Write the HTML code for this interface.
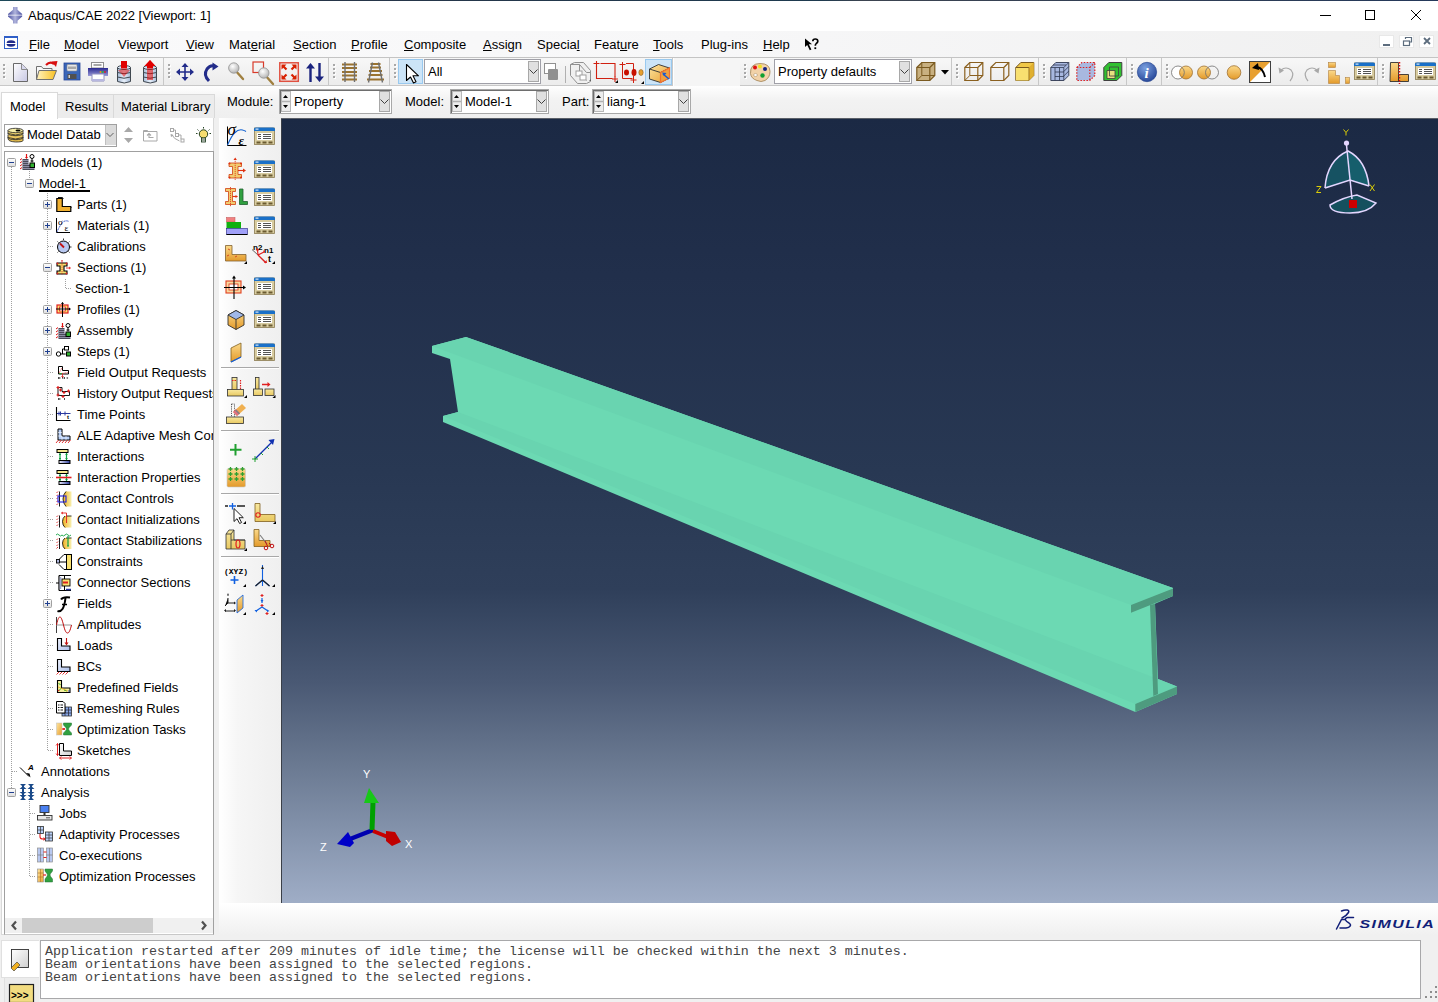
<!DOCTYPE html>
<html><head><meta charset="utf-8"><title>Abaqus/CAE</title>
<style>
html,body{margin:0;padding:0;width:1438px;height:1002px;overflow:hidden;background:#f0f0f0;font-family:"Liberation Sans",sans-serif;font-size:13px;color:#000;position:relative}
.a{position:absolute}
.t{position:absolute;white-space:nowrap}
u{text-decoration:underline;text-underline-offset:1px}
svg.ov{position:absolute;left:0;top:0;width:1438px;height:1002px;pointer-events:none}
</style></head><body>
<div class="a" style="left:0px;top:0px;width:1438px;height:1px;background:linear-gradient(90deg,#1d4a5a 0%,#2a3346 9%,#1e3a4f 57%,#3c4450 60%,#24385a 100%)"></div>
<div class="a" style="left:0px;top:1px;width:1438px;height:30px;background:#fff"></div>
<div class="t" style="left:28px;top:8.20px;font-size:13px;line-height:15px;color:#000;">Abaqus/CAE 2022 [Viewport: 1]</div>
<div class="a" style="left:0px;top:31px;width:1438px;height:26px;background:linear-gradient(90deg,#fafafb 0%,#f7f7f8 50%,#f0f0f0 100%)"></div>
<div class="a" style="left:0px;top:57px;width:1438px;height:1px;background:#c4c4c4"></div>
<div class="t" style="left:29px;top:37.20px;font-size:13px;line-height:15px;color:#000;"><u>F</u>ile</div>
<div class="t" style="left:64px;top:37.20px;font-size:13px;line-height:15px;color:#000;"><u>M</u>odel</div>
<div class="t" style="left:118px;top:37.20px;font-size:13px;line-height:15px;color:#000;">Vie<u>w</u>port</div>
<div class="t" style="left:186px;top:37.20px;font-size:13px;line-height:15px;color:#000;"><u>V</u>iew</div>
<div class="t" style="left:229px;top:37.20px;font-size:13px;line-height:15px;color:#000;">Mat<u>e</u>rial</div>
<div class="t" style="left:293px;top:37.20px;font-size:13px;line-height:15px;color:#000;"><u>S</u>ection</div>
<div class="t" style="left:351px;top:37.20px;font-size:13px;line-height:15px;color:#000;"><u>P</u>rofile</div>
<div class="t" style="left:404px;top:37.20px;font-size:13px;line-height:15px;color:#000;"><u>C</u>omposite</div>
<div class="t" style="left:483px;top:37.20px;font-size:13px;line-height:15px;color:#000;"><u>A</u>ssign</div>
<div class="t" style="left:537px;top:37.20px;font-size:13px;line-height:15px;color:#000;">Specia<u>l</u></div>
<div class="t" style="left:594px;top:37.20px;font-size:13px;line-height:15px;color:#000;">Feat<u>u</u>re</div>
<div class="t" style="left:653px;top:37.20px;font-size:13px;line-height:15px;color:#000;"><u>T</u>ools</div>
<div class="t" style="left:701px;top:37.20px;font-size:13px;line-height:15px;color:#000;">Plu<u>g</u>-ins</div>
<div class="t" style="left:763px;top:37.20px;font-size:13px;line-height:15px;color:#000;"><u>H</u>elp</div>
<div class="a" style="left:1379px;top:35px;width:15px;height:13px;background:#fff;box-shadow:inset 0 0 0 1px #e8e8e8"></div>
<div class="a" style="left:1399px;top:35px;width:15px;height:13px;background:#fff;box-shadow:inset 0 0 0 1px #e8e8e8"></div>
<div class="a" style="left:1419px;top:35px;width:15px;height:13px;background:#fff;box-shadow:inset 0 0 0 1px #e8e8e8"></div>
<div class="a" style="left:0px;top:58px;width:1438px;height:28px;background:#f5f5f5"></div>
<div class="a" style="left:0px;top:58px;width:163px;height:27px;background:linear-gradient(#f7f7f7,#ececec)"></div>
<div class="a" style="left:0px;top:85px;width:163px;height:1px;background:#c8c8c8"></div>
<div class="a" style="left:163px;top:58px;width:1px;height:28px;background:#c8c8c8"></div>
<div class="a" style="left:164px;top:58px;width:1px;height:28px;background:#fff"></div>
<div class="a" style="left:3px;top:64px;width:2px;height:2px;background:#a8a8a8;box-shadow:1px 1px 0 #fff"></div>
<div class="a" style="left:3px;top:68px;width:2px;height:2px;background:#a8a8a8;box-shadow:1px 1px 0 #fff"></div>
<div class="a" style="left:3px;top:72px;width:2px;height:2px;background:#a8a8a8;box-shadow:1px 1px 0 #fff"></div>
<div class="a" style="left:3px;top:76px;width:2px;height:2px;background:#a8a8a8;box-shadow:1px 1px 0 #fff"></div>
<div class="a" style="left:164px;top:58px;width:164px;height:27px;background:linear-gradient(#f7f7f7,#ececec)"></div>
<div class="a" style="left:164px;top:85px;width:164px;height:1px;background:#c8c8c8"></div>
<div class="a" style="left:328px;top:58px;width:1px;height:28px;background:#c8c8c8"></div>
<div class="a" style="left:329px;top:58px;width:1px;height:28px;background:#fff"></div>
<div class="a" style="left:168px;top:64px;width:2px;height:2px;background:#a8a8a8;box-shadow:1px 1px 0 #fff"></div>
<div class="a" style="left:168px;top:68px;width:2px;height:2px;background:#a8a8a8;box-shadow:1px 1px 0 #fff"></div>
<div class="a" style="left:168px;top:72px;width:2px;height:2px;background:#a8a8a8;box-shadow:1px 1px 0 #fff"></div>
<div class="a" style="left:168px;top:76px;width:2px;height:2px;background:#a8a8a8;box-shadow:1px 1px 0 #fff"></div>
<div class="a" style="left:329px;top:58px;width:60px;height:27px;background:linear-gradient(#f7f7f7,#ececec)"></div>
<div class="a" style="left:329px;top:85px;width:60px;height:1px;background:#c8c8c8"></div>
<div class="a" style="left:389px;top:58px;width:1px;height:28px;background:#c8c8c8"></div>
<div class="a" style="left:390px;top:58px;width:1px;height:28px;background:#fff"></div>
<div class="a" style="left:333px;top:64px;width:2px;height:2px;background:#a8a8a8;box-shadow:1px 1px 0 #fff"></div>
<div class="a" style="left:333px;top:68px;width:2px;height:2px;background:#a8a8a8;box-shadow:1px 1px 0 #fff"></div>
<div class="a" style="left:333px;top:72px;width:2px;height:2px;background:#a8a8a8;box-shadow:1px 1px 0 #fff"></div>
<div class="a" style="left:333px;top:76px;width:2px;height:2px;background:#a8a8a8;box-shadow:1px 1px 0 #fff"></div>
<div class="a" style="left:390px;top:58px;width:282px;height:27px;background:linear-gradient(#f7f7f7,#ececec)"></div>
<div class="a" style="left:390px;top:85px;width:282px;height:1px;background:#c8c8c8"></div>
<div class="a" style="left:672px;top:58px;width:1px;height:28px;background:#c8c8c8"></div>
<div class="a" style="left:673px;top:58px;width:1px;height:28px;background:#fff"></div>
<div class="a" style="left:394px;top:64px;width:2px;height:2px;background:#a8a8a8;box-shadow:1px 1px 0 #fff"></div>
<div class="a" style="left:394px;top:68px;width:2px;height:2px;background:#a8a8a8;box-shadow:1px 1px 0 #fff"></div>
<div class="a" style="left:394px;top:72px;width:2px;height:2px;background:#a8a8a8;box-shadow:1px 1px 0 #fff"></div>
<div class="a" style="left:394px;top:76px;width:2px;height:2px;background:#a8a8a8;box-shadow:1px 1px 0 #fff"></div>
<div class="a" style="left:740px;top:58px;width:211px;height:27px;background:linear-gradient(#f7f7f7,#ececec)"></div>
<div class="a" style="left:740px;top:85px;width:211px;height:1px;background:#c8c8c8"></div>
<div class="a" style="left:951px;top:58px;width:1px;height:28px;background:#c8c8c8"></div>
<div class="a" style="left:952px;top:58px;width:1px;height:28px;background:#fff"></div>
<div class="a" style="left:744px;top:64px;width:2px;height:2px;background:#a8a8a8;box-shadow:1px 1px 0 #fff"></div>
<div class="a" style="left:744px;top:68px;width:2px;height:2px;background:#a8a8a8;box-shadow:1px 1px 0 #fff"></div>
<div class="a" style="left:744px;top:72px;width:2px;height:2px;background:#a8a8a8;box-shadow:1px 1px 0 #fff"></div>
<div class="a" style="left:744px;top:76px;width:2px;height:2px;background:#a8a8a8;box-shadow:1px 1px 0 #fff"></div>
<div class="a" style="left:952px;top:58px;width:86px;height:27px;background:linear-gradient(#f7f7f7,#ececec)"></div>
<div class="a" style="left:952px;top:85px;width:86px;height:1px;background:#c8c8c8"></div>
<div class="a" style="left:1038px;top:58px;width:1px;height:28px;background:#c8c8c8"></div>
<div class="a" style="left:1039px;top:58px;width:1px;height:28px;background:#fff"></div>
<div class="a" style="left:956px;top:64px;width:2px;height:2px;background:#a8a8a8;box-shadow:1px 1px 0 #fff"></div>
<div class="a" style="left:956px;top:68px;width:2px;height:2px;background:#a8a8a8;box-shadow:1px 1px 0 #fff"></div>
<div class="a" style="left:956px;top:72px;width:2px;height:2px;background:#a8a8a8;box-shadow:1px 1px 0 #fff"></div>
<div class="a" style="left:956px;top:76px;width:2px;height:2px;background:#a8a8a8;box-shadow:1px 1px 0 #fff"></div>
<div class="a" style="left:1039px;top:58px;width:87px;height:27px;background:linear-gradient(#f7f7f7,#ececec)"></div>
<div class="a" style="left:1039px;top:85px;width:87px;height:1px;background:#c8c8c8"></div>
<div class="a" style="left:1126px;top:58px;width:1px;height:28px;background:#c8c8c8"></div>
<div class="a" style="left:1127px;top:58px;width:1px;height:28px;background:#fff"></div>
<div class="a" style="left:1043px;top:64px;width:2px;height:2px;background:#a8a8a8;box-shadow:1px 1px 0 #fff"></div>
<div class="a" style="left:1043px;top:68px;width:2px;height:2px;background:#a8a8a8;box-shadow:1px 1px 0 #fff"></div>
<div class="a" style="left:1043px;top:72px;width:2px;height:2px;background:#a8a8a8;box-shadow:1px 1px 0 #fff"></div>
<div class="a" style="left:1043px;top:76px;width:2px;height:2px;background:#a8a8a8;box-shadow:1px 1px 0 #fff"></div>
<div class="a" style="left:1127px;top:58px;width:34px;height:27px;background:linear-gradient(#f7f7f7,#ececec)"></div>
<div class="a" style="left:1127px;top:85px;width:34px;height:1px;background:#c8c8c8"></div>
<div class="a" style="left:1161px;top:58px;width:1px;height:28px;background:#c8c8c8"></div>
<div class="a" style="left:1162px;top:58px;width:1px;height:28px;background:#fff"></div>
<div class="a" style="left:1131px;top:64px;width:2px;height:2px;background:#a8a8a8;box-shadow:1px 1px 0 #fff"></div>
<div class="a" style="left:1131px;top:68px;width:2px;height:2px;background:#a8a8a8;box-shadow:1px 1px 0 #fff"></div>
<div class="a" style="left:1131px;top:72px;width:2px;height:2px;background:#a8a8a8;box-shadow:1px 1px 0 #fff"></div>
<div class="a" style="left:1131px;top:76px;width:2px;height:2px;background:#a8a8a8;box-shadow:1px 1px 0 #fff"></div>
<div class="a" style="left:1162px;top:58px;width:215px;height:27px;background:linear-gradient(#f7f7f7,#ececec)"></div>
<div class="a" style="left:1162px;top:85px;width:215px;height:1px;background:#c8c8c8"></div>
<div class="a" style="left:1377px;top:58px;width:1px;height:28px;background:#c8c8c8"></div>
<div class="a" style="left:1378px;top:58px;width:1px;height:28px;background:#fff"></div>
<div class="a" style="left:1166px;top:64px;width:2px;height:2px;background:#a8a8a8;box-shadow:1px 1px 0 #fff"></div>
<div class="a" style="left:1166px;top:68px;width:2px;height:2px;background:#a8a8a8;box-shadow:1px 1px 0 #fff"></div>
<div class="a" style="left:1166px;top:72px;width:2px;height:2px;background:#a8a8a8;box-shadow:1px 1px 0 #fff"></div>
<div class="a" style="left:1166px;top:76px;width:2px;height:2px;background:#a8a8a8;box-shadow:1px 1px 0 #fff"></div>
<div class="a" style="left:1378px;top:58px;width:60px;height:27px;background:linear-gradient(#f7f7f7,#ececec)"></div>
<div class="a" style="left:1378px;top:85px;width:60px;height:1px;background:#c8c8c8"></div>
<div class="a" style="left:1438px;top:58px;width:1px;height:28px;background:#c8c8c8"></div>
<div class="a" style="left:1439px;top:58px;width:1px;height:28px;background:#fff"></div>
<div class="a" style="left:1382px;top:64px;width:2px;height:2px;background:#a8a8a8;box-shadow:1px 1px 0 #fff"></div>
<div class="a" style="left:1382px;top:68px;width:2px;height:2px;background:#a8a8a8;box-shadow:1px 1px 0 #fff"></div>
<div class="a" style="left:1382px;top:72px;width:2px;height:2px;background:#a8a8a8;box-shadow:1px 1px 0 #fff"></div>
<div class="a" style="left:1382px;top:76px;width:2px;height:2px;background:#a8a8a8;box-shadow:1px 1px 0 #fff"></div>
<div class="a" style="left:0px;top:86px;width:1438px;height:32px;background:linear-gradient(#fefefe 0%,#f2f2f2 45%,#efefef 100%)"></div>
<div class="t" style="left:227px;top:94.20px;font-size:13px;line-height:15px;color:#000;">Module:</div>
<div class="a" style="left:279px;top:89px;width:111px;height:23px;background:#fff;border:1px solid #a8a8a8;box-shadow:inset 1px 1px 0 #6e6e6e"></div>
<div class="a" style="left:379px;top:91px;width:9px;height:19px;background:#e0e0e0;border:1px solid #a8a8a8"></div>
<div class="a" style="left:281px;top:91px;width:8px;height:19px;background:#ececec;border:1px solid #b8b8b8"></div>
<div class="t" style="left:294px;top:94.20px;font-size:13px;line-height:15px;color:#000;">Property</div>
<div class="t" style="left:405px;top:94.20px;font-size:13px;line-height:15px;color:#000;">Model:</div>
<div class="a" style="left:450px;top:89px;width:97px;height:23px;background:#fff;border:1px solid #a8a8a8;box-shadow:inset 1px 1px 0 #6e6e6e"></div>
<div class="a" style="left:536px;top:91px;width:9px;height:19px;background:#e0e0e0;border:1px solid #a8a8a8"></div>
<div class="a" style="left:452px;top:91px;width:8px;height:19px;background:#ececec;border:1px solid #b8b8b8"></div>
<div class="t" style="left:465px;top:94.20px;font-size:13px;line-height:15px;color:#000;">Model-1</div>
<div class="t" style="left:562px;top:94.20px;font-size:13px;line-height:15px;color:#000;">Part:</div>
<div class="a" style="left:592px;top:89px;width:97px;height:23px;background:#fff;border:1px solid #a8a8a8;box-shadow:inset 1px 1px 0 #6e6e6e"></div>
<div class="a" style="left:678px;top:91px;width:9px;height:19px;background:#e0e0e0;border:1px solid #a8a8a8"></div>
<div class="a" style="left:594px;top:91px;width:8px;height:19px;background:#ececec;border:1px solid #b8b8b8"></div>
<div class="t" style="left:607px;top:94.20px;font-size:13px;line-height:15px;color:#000;">liang-1</div>
<div class="a" style="left:424px;top:59px;width:115px;height:23px;background:#fff;border:1px solid #a0a0a8"></div>
<div class="a" style="left:528px;top:61px;width:9px;height:19px;background:#e0e0e0;border:1px solid #a8a8a8"></div>
<div class="t" style="left:428px;top:64.20px;font-size:13px;line-height:15px;color:#000;">All</div>
<div class="a" style="left:774px;top:59px;width:136px;height:23px;background:#fff;border:1px solid #a0a0a8"></div>
<div class="a" style="left:899px;top:61px;width:9px;height:19px;background:#e0e0e0;border:1px solid #a8a8a8"></div>
<div class="t" style="left:778px;top:64.20px;font-size:13px;line-height:15px;color:#000;">Property defaults</div>
<div class="a" style="left:398px;top:59px;width:25px;height:25px;background:#cce4f7;border:1px solid #99c9ef;box-sizing:border-box"></div>
<div class="a" style="left:645px;top:59px;width:27px;height:26px;background:#cce4f7;border:1px solid #99c9ef;box-sizing:border-box"></div>
<div class="a" style="left:1px;top:117px;width:213px;height:818px;background:#fff;border:1px solid #d9d9d9;box-sizing:border-box"></div>
<div class="a" style="left:57px;top:94px;width:57px;height:24px;background:#ececec;border:1px solid #d9d9d9;border-bottom:none;box-sizing:border-box"></div>
<div class="a" style="left:113px;top:94px;width:102px;height:24px;background:#ececec;border:1px solid #d9d9d9;border-bottom:none;box-sizing:border-box"></div>
<div class="a" style="left:1px;top:92px;width:57px;height:27px;background:#fff;border:1px solid #d9d9d9;border-bottom:none;box-sizing:border-box"></div>
<div class="t" style="left:10px;top:99.20px;font-size:13px;line-height:15px;color:#000;">Model</div>
<div class="t" style="left:65px;top:99.20px;font-size:13px;line-height:15px;color:#000;">Results</div>
<div class="t" style="left:121px;top:99.20px;font-size:13px;line-height:15px;color:#000;">Material Library</div>
<div class="a" style="left:4px;top:124px;width:111px;height:21px;background:#fff;border:1px solid #a0a0a0"></div>
<div class="a" style="left:105px;top:125px;width:10px;height:20px;background:#dadada;border-left:1px solid #c0c0c0"></div>
<div class="t" style="left:27px;top:127px;width:77px;overflow:hidden;font-size:13px;line-height:15px">Model Datab</div>
<div class="a" style="left:4px;top:151px;width:210px;height:784px;background:#fff;border:1px solid #a0a0a0;border-bottom-color:#c8c8c8;box-sizing:border-box"></div>
<div class="a" style="left:5px;top:918px;width:208px;height:15px;background:#f0f0f0"></div>
<div class="a" style="left:22px;top:918px;width:131px;height:15px;background:#cdcdcd"></div>
<div class="a" style="left:5px;top:152px;width:208px;height:765px;overflow:hidden">
<div class="t" style="left:36px;top:3.20px;font-size:13px;line-height:15px">Models (1)</div>
<div class="t" style="left:34px;top:24.20px;font-size:13px;line-height:15px">Model-1</div>
<div class="t" style="left:72px;top:45.20px;font-size:13px;line-height:15px">Parts (1)</div>
<div class="t" style="left:72px;top:66.20px;font-size:13px;line-height:15px">Materials (1)</div>
<div class="t" style="left:72px;top:87.20px;font-size:13px;line-height:15px">Calibrations</div>
<div class="t" style="left:72px;top:108.20px;font-size:13px;line-height:15px">Sections (1)</div>
<div class="t" style="left:70px;top:129.20px;font-size:13px;line-height:15px">Section-1</div>
<div class="t" style="left:72px;top:150.20px;font-size:13px;line-height:15px">Profiles (1)</div>
<div class="t" style="left:72px;top:171.20px;font-size:13px;line-height:15px">Assembly</div>
<div class="t" style="left:72px;top:192.20px;font-size:13px;line-height:15px">Steps (1)</div>
<div class="t" style="left:72px;top:213.20px;font-size:13px;line-height:15px">Field Output Requests</div>
<div class="t" style="left:72px;top:234.20px;font-size:13px;line-height:15px">History Output Requests</div>
<div class="t" style="left:72px;top:255.20px;font-size:13px;line-height:15px">Time Points</div>
<div class="t" style="left:72px;top:276.20px;font-size:13px;line-height:15px">ALE Adaptive Mesh Constraints</div>
<div class="t" style="left:72px;top:297.20px;font-size:13px;line-height:15px">Interactions</div>
<div class="t" style="left:72px;top:318.20px;font-size:13px;line-height:15px">Interaction Properties</div>
<div class="t" style="left:72px;top:339.20px;font-size:13px;line-height:15px">Contact Controls</div>
<div class="t" style="left:72px;top:360.20px;font-size:13px;line-height:15px">Contact Initializations</div>
<div class="t" style="left:72px;top:381.20px;font-size:13px;line-height:15px">Contact Stabilizations</div>
<div class="t" style="left:72px;top:402.20px;font-size:13px;line-height:15px">Constraints</div>
<div class="t" style="left:72px;top:423.20px;font-size:13px;line-height:15px">Connector Sections</div>
<div class="t" style="left:72px;top:444.20px;font-size:13px;line-height:15px">Fields</div>
<div class="t" style="left:72px;top:465.20px;font-size:13px;line-height:15px">Amplitudes</div>
<div class="t" style="left:72px;top:486.20px;font-size:13px;line-height:15px">Loads</div>
<div class="t" style="left:72px;top:507.20px;font-size:13px;line-height:15px">BCs</div>
<div class="t" style="left:72px;top:528.20px;font-size:13px;line-height:15px">Predefined Fields</div>
<div class="t" style="left:72px;top:549.20px;font-size:13px;line-height:15px">Remeshing Rules</div>
<div class="t" style="left:72px;top:570.20px;font-size:13px;line-height:15px">Optimization Tasks</div>
<div class="t" style="left:72px;top:591.20px;font-size:13px;line-height:15px">Sketches</div>
<div class="t" style="left:36px;top:612.20px;font-size:13px;line-height:15px">Annotations</div>
<div class="t" style="left:36px;top:633.20px;font-size:13px;line-height:15px">Analysis</div>
<div class="t" style="left:54px;top:654.20px;font-size:13px;line-height:15px">Jobs</div>
<div class="t" style="left:54px;top:675.20px;font-size:13px;line-height:15px">Adaptivity Processes</div>
<div class="t" style="left:54px;top:696.20px;font-size:13px;line-height:15px">Co-executions</div>
<div class="t" style="left:54px;top:717.20px;font-size:13px;line-height:15px">Optimization Processes</div>
</div>
<div class="a" style="left:39px;top:190px;width:51px;height:2px;background:#000"></div>
<div class="a" style="left:219px;top:118px;width:62px;height:785px;background:linear-gradient(90deg,#ffffff 0%,#f6f6f6 30%,#efefef 100%)"></div>
<div class="a" style="left:221px;top:367px;width:58px;height:1px;background:#a8a8a8"></div>
<div class="a" style="left:221px;top:368px;width:58px;height:1px;background:#fff"></div>
<div class="a" style="left:221px;top:430px;width:58px;height:1px;background:#a8a8a8"></div>
<div class="a" style="left:221px;top:431px;width:58px;height:1px;background:#fff"></div>
<div class="a" style="left:221px;top:493px;width:58px;height:1px;background:#a8a8a8"></div>
<div class="a" style="left:221px;top:494px;width:58px;height:1px;background:#fff"></div>
<div class="a" style="left:221px;top:556px;width:58px;height:1px;background:#a8a8a8"></div>
<div class="a" style="left:221px;top:557px;width:58px;height:1px;background:#fff"></div>
<div class="a" style="left:281px;top:118px;width:1157px;height:785px;background:linear-gradient(#1b2944 0%,#212f4b 20%,#283853 45%,#2f3f5a 60%,#4a5974 72%,#697890 82%,#8493ac 91%,#9fadc6 100%)"></div>
<div class="a" style="left:281px;top:118px;width:1px;height:785px;background:#3a3f48"></div>
<div class="a" style="left:281px;top:118px;width:1157px;height:1px;background:#5a5f68"></div>
<div class="a" style="left:219px;top:903px;width:1219px;height:34px;background:linear-gradient(#ffffff,#efefef)"></div>
<div class="a" style="left:0px;top:935px;width:1438px;height:67px;background:#f0f0f0"></div>
<div class="a" style="left:40px;top:940px;width:1381px;height:59px;background:#fff;border:1px solid #a8a8aa;box-sizing:border-box"></div>
<div class="a" style="left:1px;top:940px;width:38px;height:38px;background:#fff;border:1px solid #e0e0e0;border-right:none;box-sizing:border-box"></div>
<div class="a" style="left:4px;top:978px;width:34px;height:24px;background:#ececec;border-left:1px solid #e0e0e0"></div>
<div class="a" style="left:45px;top:945px;font-family:'Liberation Mono',monospace;font-size:13.333px;line-height:13px;white-space:pre;color:#444">Application restarted after 209 minutes of idle time; the license will be checked within the next 3 minutes.<br>Beam orientations have been assigned to the selected regions.<br>Beam orientations have been assigned to the selected regions.</div>
<div class="a" style="left:1435px;top:986px;width:2px;height:2px;background:#8e8e8e"></div>
<div class="a" style="left:1430px;top:991px;width:2px;height:2px;background:#8e8e8e"></div>
<div class="a" style="left:1435px;top:991px;width:2px;height:2px;background:#8e8e8e"></div>
<div class="a" style="left:1425px;top:996px;width:2px;height:2px;background:#8e8e8e"></div>
<div class="a" style="left:1430px;top:996px;width:2px;height:2px;background:#8e8e8e"></div>
<div class="a" style="left:1435px;top:996px;width:2px;height:2px;background:#8e8e8e"></div>
<div class="a" style="left:565px;top:66px;width:1px;height:17px;background:#b0b0b0"></div>
<svg class="ov" width="1438" height="1002" viewBox="0 0 1438 1002" font-family="Liberation Sans">
<defs>
<linearGradient id="gPage" x1="0" y1="0" x2="1" y2="1"><stop offset="0" stop-color="#ffffff"/><stop offset="1" stop-color="#c8c8e4"/></linearGradient>
<linearGradient id="gYel" x1="0" y1="0" x2="1" y2="0"><stop offset="0" stop-color="#fff2c0"/><stop offset="1" stop-color="#f8c020"/></linearGradient>
<linearGradient id="gOr" x1="0" y1="0" x2="0" y2="1"><stop offset="0" stop-color="#fbd98a"/><stop offset="1" stop-color="#e39a2a"/></linearGradient>
<linearGradient id="gOr2" x1="0" y1="0" x2="1" y2="1"><stop offset="0" stop-color="#fde4a0"/><stop offset="1" stop-color="#e8a030"/></linearGradient>
<linearGradient id="gTan" x1="0" y1="0" x2="0" y2="1"><stop offset="0" stop-color="#f8e8a0"/><stop offset="1" stop-color="#e8c860"/></linearGradient>
<linearGradient id="gPrn" x1="0" y1="0" x2="0" y2="1"><stop offset="0" stop-color="#2a2a90"/><stop offset="1" stop-color="#9a9ad8"/></linearGradient>
<linearGradient id="gDb" x1="0" y1="0" x2="1" y2="0"><stop offset="0" stop-color="#a8bcd8"/><stop offset="0.5" stop-color="#e8f0fa"/><stop offset="1" stop-color="#a8bcd8"/></linearGradient>
<radialGradient id="gLens" cx="0.4" cy="0.35" r="0.7"><stop offset="0" stop-color="#ffffff"/><stop offset="1" stop-color="#b0b0b0"/></radialGradient>
<radialGradient id="gInfo" cx="0.4" cy="0.3" r="0.7"><stop offset="0" stop-color="#7aa0e0"/><stop offset="1" stop-color="#2a4a9a"/></radialGradient>
<linearGradient id="gBlue" x1="0" y1="0" x2="0" y2="1"><stop offset="0" stop-color="#c8d4f0"/><stop offset="1" stop-color="#98aadc"/></linearGradient>
</defs>
<defs><linearGradient id="gTi" x1="0" y1="0" x2="1" y2="0"><stop offset="0" stop-color="#4a50a0"/><stop offset="0.5" stop-color="#b0b4dc"/><stop offset="1" stop-color="#4a50a0"/></linearGradient></defs><g transform="translate(8,7)" fill="url(#gTi)"><path d="M5 0h4.5v2.8l4.7 4.2v0.8h-14.2v-0.8l5-4.2z"/><path d="M0 8.6h14.2v0.8l-4.7 4.4v2.7h-4.5v-2.7l-5-4.4z"/></g>
<path d="M1320 15.5h11" stroke="#000" stroke-width="1"/>
<rect x="1365.5" y="10.5" width="9" height="9" fill="none" stroke="#000"/>
<path d="M1411 10l10 10M1421 10l-10 10" stroke="#000" stroke-width="1"/>
<g transform="translate(4,36)"><rect x="0.5" y="0.5" width="13" height="12" fill="#fff" stroke="#2f5fc8"/><rect x="0" y="0" width="14" height="2" fill="#2f5fc8"/><ellipse cx="7" cy="7.5" rx="4.5" ry="3.2" fill="#1f2a8a"/><rect x="2" y="7" width="10" height="1" fill="#fff"/></g>
<g transform="translate(805,38.5)"><path d="M0 0v8.5l2.2-2 2.6 5.2 1.6-0.8-2.6-5.1h3.2z" fill="#000"/><path d="M7.8 2.8q0-2.3 2.5-2.3q2.5 0 2.5 2.3q0 1.4-1.6 2.3q-0.9 0.6-0.9 2.2" fill="none" stroke="#000" stroke-width="1.7"/><rect x="9.4" y="8.8" width="1.8" height="1.8" fill="#000"/></g>
<rect x="1383" y="44" width="7" height="2" fill="#5d6d7e"/>
<g fill="none" stroke="#5d6d7e" stroke-width="1.2"><rect x="1403.5" y="41" width="6" height="4.5"/><path d="M1405.5 39v-1.5h6v4.5h-2"/></g>
<path d="M1424 38l6 6M1430 38l-6 6" stroke="#5d6d7e" stroke-width="1.8"/>
<path d="M380.5 99.5l4 4 4-4" fill="none" stroke="#404040" stroke-width="1"/>
<path d="M283 98l2.5-3 2.5 3z M283 105l2.5 3 2.5-3z" fill="#000"/>
<path d="M282 101.5h8" stroke="#b0b0b0" stroke-width="1.5"/>
<path d="M537.5 99.5l4 4 4-4" fill="none" stroke="#404040" stroke-width="1"/>
<path d="M454 98l2.5-3 2.5 3z M454 105l2.5 3 2.5-3z" fill="#000"/>
<path d="M453 101.5h8" stroke="#b0b0b0" stroke-width="1.5"/>
<path d="M679.5 99.5l4 4 4-4" fill="none" stroke="#404040" stroke-width="1"/>
<path d="M596 98l2.5-3 2.5 3z M596 105l2.5 3 2.5-3z" fill="#000"/>
<path d="M595 101.5h8" stroke="#b0b0b0" stroke-width="1.5"/>
<path d="M529.5 69.5l4 4 4-4" fill="none" stroke="#404040" stroke-width="1"/>
<path d="M900.5 69.5l4 4 4-4" fill="none" stroke="#404040" stroke-width="1"/>
<path d="M106.5 133l3.5 3.5 3.5-3.5" fill="none" stroke="#606060"/>
<path d="M16 921.5l-3.5 4 3.5 4" fill="none" stroke="#505050" stroke-width="2.2"/>
<path d="M202 921.5l3.5 4-3.5 4" fill="none" stroke="#505050" stroke-width="2.2"/>
<g>
<polygon points="432,346 466,337 1173,588 1173,596 1155,603.7 1158,679 1177,686.5 1177,694 1135.3,712 443,422 443,416 458,412 450,359 432,353" fill="#6cd9b3"/>
<polygon points="432,346 466,337 1173,588 1131,605" fill="#69d4b0"/>
<polygon points="443,416 458,412 1158,679 1177,686.5 1135.3,704" fill="#69d4b0"/>
<polygon points="1131,605 1173,588.5 1173,596 1131,612.7" fill="#4e9b7f"/>
<polygon points="1150,605 1155,603.7 1158,694 1153.3,696" fill="#4e9b7f"/>
<polygon points="1135.3,704 1177,686.5 1177,694 1135.3,712" fill="#4e9b7f"/>
</g>
<g>
<path d="M1325 188 Q1327 160 1348 151 L1350 180 Z" fill="#165262"/>
<path d="M1348 151 Q1366 160 1369 186 L1350 180 Z" fill="#165e6c"/>
<path d="M1330 205 Q1344 197 1357 195 L1376 203 Q1368 213 1350 213 Q1330 213 1330 205 Z" fill="#15505e"/>
<g fill="none" stroke="#e4d6ff" stroke-width="1.5">
<path d="M1325 188 Q1327 160 1348 151 Q1366 160 1369 186"/>
<path d="M1325 188 L1350 180 L1369 186"/>
<path d="M1346.5 145 L1352 199"/>
<path d="M1330 205 Q1344 197 1357 195 L1376 203 Q1368 213 1350 213 Q1330 213 1330 205 Z"/>
</g>
<circle cx="1346.5" cy="143" r="2.6" fill="#e4d6ff"/>
<rect x="1349" y="200" width="8" height="8" fill="#cc0000"/>
<g fill="none" stroke="#f0e000" stroke-width="0.9">
<path d="M1343.5 129.5l2.5 3 2.5-3M1346 132.5v3"/>
<path d="M1316.5 186.5h4.5l-4.5 6h4.5"/>
<path d="M1370 184.5l4.5 6.5M1374.5 184.5l-4.5 6.5"/>
</g>
</g>
<g>
<path d="M373 830 L345 841" stroke="#0000b0" stroke-width="4.5"/>
<polygon points="337,844 348,832 354,843 350,847" fill="#0000c8"/>
<path d="M372 830 L373 802" stroke="#00a000" stroke-width="5"/>
<polygon points="369,788 364,803 379,803" fill="#18c818"/>
<path d="M373 831 L388 837" stroke="#c80000" stroke-width="4"/>
<polygon points="386,831 395,832 401,842 392,846 386,841" fill="#c00000"/>
<text x="363" y="778" font-size="11" fill="#fff" font-family="Liberation Sans">Y</text>
<text x="320" y="851" font-size="11" fill="#fff" font-family="Liberation Sans">Z</text>
<text x="405" y="848" font-size="11" fill="#fff" font-family="Liberation Sans">X</text>
</g>
<g fill="#101e78">
<text x="0" y="0" transform="translate(1359.5,927.5) scale(1.45,1)" font-size="11" font-style="italic" font-weight="bold" font-family="Liberation Sans" letter-spacing="1">SIMULIA</text>
</g>
<g fill="none" stroke="#101e78" stroke-width="1.5" stroke-linecap="round">
<path d="M1341.5 911 C1346 909, 1350 910, 1348.5 912.5 C1347 915, 1344 917, 1342 918"/>
<path d="M1353.5 917.5 H1347.5 C1344 918.5, 1345 921, 1349 923 C1352 925, 1350 927.5, 1346 928 H1340"/>
<path d="M1336.5 929 L1341.5 919.5 H1345"/>
</g>
<g transform="translate(13,63)"><path d="M0.5 0.5h8l6 6v12h-14z" fill="url(#gPage)" stroke="#6a6a6a"/><path d="M8.5 0.5v6h6" fill="#d8d8ec" stroke="#8a8a8a"/></g>
<g transform="translate(36,60)"><path d="M0.5 6.5h5l1.5 2h9v11h-15.5z" fill="#f8f8f8" stroke="#707070"/><path d="M3 10.5h17.5l-3.5 9h-16.5z" fill="url(#gYel)" stroke="#707070"/><path d="M10 5q4-4 8-1" fill="none" stroke="#d81010" stroke-width="2.2"/><path d="M15.5 1.5l6-0.5-1.5 6z" fill="#d81010"/></g>
<g transform="translate(64,63)"><rect x="0" y="0" width="16" height="17" fill="#3a66b8" stroke="#28489a" stroke-width="0.8"/><rect x="3" y="1.5" width="10" height="6.5" rx="1" fill="#e8e8e8" stroke="#909090" stroke-width="0.6"/><rect x="4" y="3.5" width="8" height="2.5" fill="#a8a8a8"/><rect x="3.5" y="11" width="9" height="5" fill="#505050"/><rect x="4.5" y="12" width="1.5" height="3" fill="#d0d0d0"/></g>
<g transform="translate(88,62)"><rect x="3.5" y="0.5" width="12" height="5.5" fill="#fff" stroke="#909090"/><rect x="5.5" y="2" width="8" height="2" fill="#a8a8a8"/><path d="M0 6h20v8h-20z" fill="url(#gPrn)"/><circle cx="12.5" cy="10" r="0.9" fill="#f0a000"/><circle cx="14.8" cy="10" r="0.9" fill="#20c040"/><circle cx="17" cy="10" r="0.9" fill="#e02020"/><path d="M4 12h12v7h-12z" fill="#fff" stroke="#9090c0"/><rect x="4" y="17" width="12" height="2" fill="#b8b8e0"/></g>
<g transform="translate(117,61)"><path d="M0.5 6.5v14q7 3 13 0v-14" fill="url(#gDb)" stroke="#404850"/><ellipse cx="7" cy="6.5" rx="6.5" ry="2" fill="#d8e4f4" stroke="#404850"/><path d="M0.5 11.5q6.5 2.5 13 0M0.5 16q6.5 2.5 13 0" fill="none" stroke="#404850"/><path d="M4 0h6v9h3l-6 7-6-7h3z" fill="#e00000" opacity="0.5"/><path d="M4 0h6v7h-6z" fill="#e00000"/></g>
<g transform="translate(143,61)"><path d="M0.5 6.5v14q7 3 13 0v-14" fill="url(#gDb)" stroke="#404850"/><ellipse cx="7" cy="6.5" rx="6.5" ry="2" fill="#d8e4f4" stroke="#404850"/><path d="M0.5 11.5q6.5 2.5 13 0M0.5 16q6.5 2.5 13 0" fill="none" stroke="#404850"/><path d="M4 19v-14h-2.5l5.5-6 5.5 6h-2.5v14z" fill="#e00000" opacity="0.55"/><path d="M4 7v-2h-2.5l5.5-6 5.5 6h-2.5v2z" fill="#e00000"/></g>
<g transform="translate(176,63)"><path d="M9 1v16M1 9h16" stroke="#222c8a" stroke-width="1.6"/><path d="M9 0l-3.5 4h7zM9 18l-3.5-4h7zM0 9l4-3.5v7zM18 9l-4-3.5v7z" fill="#222c8a"/></g>
<g transform="translate(203,63)"><path d="M6 18q-6-6-2-12q3-4 7-3" fill="none" stroke="#222c8a" stroke-width="3"/><path d="M9.5 -0.5l6 4-6 4z" fill="#222c8a"/></g>
<g transform="translate(228,62)"><path d="M7 8l8 9" stroke="#a08040" stroke-width="2.4" stroke-linecap="round"/><circle cx="5.8" cy="6" r="5.2" fill="url(#gLens)" stroke="#909090" stroke-width="0.8"/></g>
<g transform="translate(252,61)"><rect x="1" y="1" width="10.5" height="10.5" fill="none" stroke="#d83a2a" stroke-width="1.2"/></g>
<g transform="translate(258,67)"><path d="M7 8l8 9" stroke="#a08040" stroke-width="2.4" stroke-linecap="round"/><circle cx="5.8" cy="6" r="5.2" fill="url(#gLens)" stroke="#909090" stroke-width="0.8"/></g>
<g transform="translate(279,62)"><rect x="0.8" y="0.8" width="18.5" height="18.5" fill="none" stroke="#e05040" stroke-width="1.5"/><g stroke="#d82000" stroke-width="2.2"><path d="M3.5 3.5l4 4M16.5 3.5l-4 4M3.5 16.5l4-4M16.5 16.5l-4-4"/></g><path d="M2.5 2.5h5l-5 5zM17.5 2.5h-5l5 5zM2.5 17.5h5l-5-5zM17.5 17.5h-5l5-5z" fill="#d82000"/></g>
<g transform="translate(306,63)"><path d="M4.5 4v15M13.5 0v15" stroke="#1a237e" stroke-width="2.4"/><path d="M0 5.5l4.5-5.5 4.5 5.5zM9 13.5l4.5 5.5 4.5-5.5z" fill="#1a237e"/></g>
<g transform="translate(342,62)"><g stroke="#9a7330" stroke-width="2"><path d="M0 2.5h15M0 6h15M0 10h15M0 13.5h15M0 17.5h15"/></g><path d="M3 0v20M12.5 0v20" stroke="#707070" stroke-width="1.4"/></g>
<g transform="translate(366,62)"><g stroke="#9a7330" stroke-width="2"><path d="M4.5 2h10M4 5.5h11M3 9h13M2.5 13h14M1 17.5h17"/></g><path d="M6.5 0.5l-4 20M12.5 0.5l4 20" stroke="#707070" stroke-width="1.4"/></g>
<g transform="translate(406,64)"><path d="M0.5 0.5v16l4-3.5 3 6 2.5-1.2-3-6h5.5z" fill="#fff" stroke="#000" stroke-width="1.1" stroke-linejoin="round"/></g>
<g transform="translate(544,63)"><rect x="0.5" y="0.5" width="11" height="10" fill="#fff" stroke="#909090"/><rect x="4" y="6" width="10" height="11" rx="1" fill="#909090"/></g>
<g transform="translate(570,62)"><path d="M0.5 2.5l4-2h9l7 8v11l-4 2h-9l-7-8z" fill="#f0f0f0" stroke="#909090"/><path d="M0.5 2.5h9l7 8h4M9.5 2.5v8l7 8" fill="none" stroke="#909090"/><rect x="6" y="9" width="6" height="5" fill="#fff" stroke="#a0a0a0"/><rect x="10" y="13" width="6" height="5" fill="#fff" stroke="#a0a0a0"/><path d="M19 19l2-2v2z" fill="#606060"/></g>
<g transform="translate(594,61)"><path d="M2.5 5v12.5h16M6.5 2.5h14.5v13" fill="none" stroke="#d02010" stroke-width="1.1"/><path d="M2.5 0v6M-0.5 2.5h6M21 15v6M18 18h6" stroke="#d02010" stroke-width="1.1"/><path d="M21 22l3-3v3z" fill="#000"/></g>
<g transform="translate(620,62)"><path d="M2.5 4v12.5h10M6 1.5h7.5v10" fill="none" stroke="#d02010" stroke-width="1"/><path d="M2.5 0v6M-0.5 2.5h6M13.5 14v7M10.5 18h6" stroke="#d02010" stroke-width="1"/><ellipse cx="6.5" cy="10.5" rx="2.5" ry="3" fill="#c81000"/><ellipse cx="14" cy="10.5" rx="2.5" ry="3.4" fill="#c81000"/><ellipse cx="21" cy="10.5" rx="2.2" ry="3" fill="#e8a030" stroke="#705020" stroke-width="0.5"/><path d="M21 22l3-3v3z" fill="#000"/></g>
<g transform="translate(649,64)"><path d="M0.5 5l9-4.5 11 3.5v10l-9 4.5-11-3.5z" fill="url(#gOr2)" stroke="#303030" stroke-width="0.9"/><path d="M0.5 5l11 3.5 9-4.5M11.5 8.5v10" fill="none" stroke="#303030" stroke-width="0.9"/><path d="M11.5 8.5l9-4.5v10l-9 4.5z" fill="#f0a040" stroke="#f07030" stroke-width="1.2"/><path d="M20 15l-6-5" stroke="#1a5ad0" stroke-width="1.6"/><path d="M13 8.5l4.5 0.5-2.5 3z" fill="#1a5ad0"/></g>
<g transform="translate(750,63)"><path d="M10 0.5q10 0 10 8q0 6-5 9q-4 2-8 0q-6-2-6.5-7q-0.5-10 9.5-10z" fill="#f2d2a8" stroke="#a08050" stroke-width="0.8"/><circle cx="5" cy="4.5" r="2" fill="#e01010"/><circle cx="10" cy="3.5" r="2" fill="#f0e020"/><circle cx="15" cy="6" r="2" fill="#102080"/><circle cx="12.5" cy="12.5" r="2.2" fill="#10a030"/><ellipse cx="5.5" cy="12" rx="2" ry="1.4" fill="#fff" stroke="#a08050" stroke-width="0.5"/></g>
<g transform="translate(916,62)"><path d="M0.8 5.5l5-5h13v13l-5 5h-13z" fill="#c8b080" stroke="#7a5a20" stroke-width="1.2"/><path d="M0.8 5.5h13v13M13.8 5.5l5-5" fill="none" stroke="#7a5a20" stroke-width="1.2"/><path d="M5.8 0.5v13h13M5.8 13.5l-5 5" fill="none" stroke="#7a5a20" stroke-width="1"/></g>
<g transform="translate(941,70)"><path d="M0 0h8l-4 4.5z" fill="#000"/></g>
<g transform="translate(964,62)"><path d="M0.8 5.5l5-5h13v13l-5 5h-13z" fill="none" stroke="#8a6020" stroke-width="1.2"/><path d="M0.8 5.5h13v13M13.8 5.5l5-5" fill="none" stroke="#8a6020" stroke-width="1.2"/><path d="M5.8 0.5v13h13M5.8 13.5l-5 5" fill="none" stroke="#8a6020" stroke-width="1"/></g>
<g transform="translate(990,62)"><path d="M0.8 5.5l5-5h13v13l-5 5h-13z" fill="none" stroke="#8a6020" stroke-width="1.2"/><path d="M0.8 5.5h13v13M13.8 5.5l5-5" fill="none" stroke="#8a6020" stroke-width="1.2"/></g>
<g transform="translate(1015,62)"><path d="M0.8 5.5l5-5h13v13l-5 5h-13z" fill="#f0c848" stroke="#7a5a20" stroke-width="1"/><path d="M0.8 5.5h13l5-5v13l-5 5z" fill="#e0b030"/><path d="M0.8 5.5h13v13" fill="none" stroke="#7a5a20"/><path d="M1 6h12.5v12.5h-12.5z" fill="#f8e070"/></g>
<g transform="translate(1050,62)"><path d="M0.8 5.5l5-5h13v13l-5 5h-13z" fill="#a8b8e0" stroke="#303850" stroke-width="0.9"/><g fill="none" stroke="#303850" stroke-width="0.8"><path d="M0.8 5.5h13v13M13.8 5.5l5-5M5 10h9M5 14.5h9M5 5.5v13M9.5 5.5v13M3 3h13M13.8 9.5l5-5M13.8 14l5-5"/></g></g>
<g transform="translate(1076,62)"><path d="M0.8 5.5l5-5h13v13l-5 5h-13z" fill="#a8b8e0" stroke="#e02020" stroke-width="1.2" stroke-dasharray="1.5 1.5"/><path d="M0.8 5.5h13v13M13.8 5.5l5-5" fill="none" stroke="#e02020" stroke-width="1.2" stroke-dasharray="1.5 1.5"/></g>
<g transform="translate(1103,62)"><path d="M0.8 5.5l5-5h13v13l-5 5h-13z" fill="#30c030" stroke="#404040" stroke-width="1"/><path d="M4 8.5h8v8h-8z" fill="#e8e080" stroke="#404040" stroke-width="0.8"/><path d="M6.5 5h9v9h-9z" fill="none" stroke="#404040" stroke-width="0.8"/></g>
<g transform="translate(1137,62)"><circle cx="10" cy="10" r="9.7" fill="url(#gInfo)" stroke="#1a3a8a" stroke-width="0.6"/><text x="7.5" y="16" font-size="15" font-style="italic" font-weight="bold" fill="#fff" font-family="Liberation Serif">i</text></g>
<g transform="translate(1171,65)"><circle cx="7" cy="7.5" r="6.5" fill="#fff" stroke="#707070" stroke-width="0.8"/><circle cx="15" cy="7.5" r="6.5" fill="url(#gOr)" stroke="#a07030" stroke-width="0.8"/><path d="M11 2.5a6.5 6.5 0 0 1 0 10" fill="none" stroke="#707070" stroke-width="0.8"/></g>
<g transform="translate(1197,65)"><circle cx="7" cy="7.5" r="6.5" fill="url(#gOr)" stroke="#a07030" stroke-width="0.8"/><circle cx="15" cy="7.5" r="6.5" fill="none" stroke="#707070" stroke-width="0.8"/></g>
<g transform="translate(1227,65)"><circle cx="7" cy="7.5" r="6.8" fill="url(#gOr)" stroke="#a07030" stroke-width="0.8"/></g>
<g transform="translate(1249,61)"><rect x="0.5" y="0.5" width="21" height="21" fill="#fff" stroke="#404040"/><path d="M0.5 0.5h21l-21 21z" fill="#e8a030"/><rect x="0.5" y="0.5" width="21" height="21" fill="none" stroke="#404040"/><path d="M8 6q6 1 8 10" fill="none" stroke="#000" stroke-width="2"/><path d="M3 7l6-5 1 7z" fill="#000"/></g>
<g transform="translate(1278,65)"><path d="M3 5q5-4 10 0q4 5-1 11" fill="none" stroke="#a8a8a8" stroke-width="1.2"/><path d="M0.5 2.5l1 6 4.5-3z" fill="#a8a8a8"/></g>
<g transform="translate(1303,65)"><path d="M14 5q-5-4-10 0q-4 5 1 11" fill="none" stroke="#a8a8a8" stroke-width="1.2"/><path d="M16.5 2.5l-1 6-4.5-3z" fill="#a8a8a8"/></g>
<g transform="translate(1328,62)"><rect x="0.5" y="0.5" width="7" height="5" fill="url(#gOr)" stroke="#b08040" stroke-width="0.6"/><path d="M0.5 8.5h7v5h4v8h-11z" fill="url(#gOr)" stroke="#b08040" stroke-width="0.6"/><rect x="17.5" y="15.5" width="4" height="6" fill="url(#gOr)" stroke="#b08040" stroke-width="0.6"/></g>
<g transform="translate(1354,62)"><rect x="0.5" y="1" width="20" height="16.5" fill="#d8cca0" stroke="#8a7a50" stroke-width="0.8"/><path d="M0 3a2 2 0 0 1 2-2.5h17a2 2 0 0 1 2 2.5v1h-21z" fill="#1a70c8"/><rect x="1.5" y="1.6" width="3" height="1" fill="#fff"/><rect x="3" y="6" width="15" height="7" fill="#fff"/><g stroke="#404040" stroke-width="0.9"><path d="M4 7.5h3M4 9.5h3M4 11.5h3M9 7.5h8M9 9.5h8M9 11.5h8"/></g><g fill="#6a5a30"><rect x="2.5" y="14.5" width="4" height="2"/><rect x="8.5" y="14.5" width="4" height="2"/><rect x="14.5" y="14.5" width="4" height="2"/></g></g>
<g transform="translate(1390,62)"><path d="M0.5 0.5h8v12h10v7h-18.5z" fill="url(#gOr)" stroke="#303030" stroke-width="0.9"/><path d="M8.5 12.5v7" stroke="#303030"/><path d="M9.5 0v22" stroke="#e01010" stroke-width="1.5" stroke-dasharray="1.5 1.5"/></g>
<g transform="translate(1415,62)"><rect x="0.5" y="1" width="20" height="16.5" fill="#d8cca0" stroke="#8a7a50" stroke-width="0.8"/><path d="M0 3a2 2 0 0 1 2-2.5h17a2 2 0 0 1 2 2.5v1h-21z" fill="#1a70c8"/><rect x="1.5" y="1.6" width="3" height="1" fill="#fff"/><rect x="3" y="6" width="15" height="7" fill="#fff"/><g stroke="#404040" stroke-width="0.9"><path d="M4 7.5h3M4 9.5h3M4 11.5h3M9 7.5h8M9 9.5h8M9 11.5h8"/></g><g fill="#6a5a30"><rect x="2.5" y="14.5" width="4" height="2"/><rect x="8.5" y="14.5" width="4" height="2"/><rect x="14.5" y="14.5" width="4" height="2"/></g></g>
<defs>
<linearGradient id="gExp" x1="0" y1="0" x2="0" y2="1"><stop offset="0" stop-color="#ffffff"/><stop offset="1" stop-color="#dcdcdc"/></linearGradient>
<linearGradient id="gLb" x1="0" y1="0" x2="1" y2="1"><stop offset="0" stop-color="#f0f4ff"/><stop offset="1" stop-color="#a8bce8"/></linearGradient>
<linearGradient id="gBlueBar" x1="0" y1="0" x2="1" y2="0"><stop offset="0" stop-color="#f0f0ff"/><stop offset="1" stop-color="#2a3a9a"/></linearGradient>
<linearGradient id="gYelH" x1="0" y1="0" x2="1" y2="0"><stop offset="0" stop-color="#f0b020"/><stop offset="1" stop-color="#f8f0b0"/></linearGradient>
<linearGradient id="gGray" x1="0" y1="0" x2="1" y2="1"><stop offset="0" stop-color="#ffffff"/><stop offset="1" stop-color="#d0d0d0"/></linearGradient>
</defs>
<path d="M11.5 167V788" stroke="#a0a0a0" stroke-width="1" stroke-dasharray="1 1"/>
<path d="M12 771.5H18" stroke="#a0a0a0" stroke-width="1" stroke-dasharray="1 1"/>
<path d="M29.5 171V179" stroke="#a0a0a0" stroke-width="1" stroke-dasharray="1 1"/>
<path d="M47.5 193V751" stroke="#a0a0a0" stroke-width="1" stroke-dasharray="1 1"/>
<path d="M65.5 279V289" stroke="#a0a0a0" stroke-width="1" stroke-dasharray="1 1"/>
<path d="M66 288.5H72" stroke="#a0a0a0" stroke-width="1" stroke-dasharray="1 1"/>
<path d="M29.5 801V877" stroke="#a0a0a0" stroke-width="1" stroke-dasharray="1 1"/>
<rect x="7.5" y="158.5" width="8" height="8" rx="1" fill="url(#gExp)" stroke="#a0a0a0"/><path d="M9 162.5h5" stroke="#1f3f8f" stroke-width="1"/>
<rect x="25.5" y="179.5" width="8" height="8" rx="1" fill="url(#gExp)" stroke="#a0a0a0"/><path d="M27 183.5h5" stroke="#1f3f8f" stroke-width="1"/>
<rect x="43.5" y="200.5" width="8" height="8" rx="1" fill="url(#gExp)" stroke="#a0a0a0"/><path d="M45 204.5h5" stroke="#1f3f8f" stroke-width="1"/><path d="M47.5 202v5" stroke="#1f3f8f" stroke-width="1"/>
<rect x="43.5" y="221.5" width="8" height="8" rx="1" fill="url(#gExp)" stroke="#a0a0a0"/><path d="M45 225.5h5" stroke="#1f3f8f" stroke-width="1"/><path d="M47.5 223v5" stroke="#1f3f8f" stroke-width="1"/>
<path d="M48 246.5H54" stroke="#a0a0a0" stroke-width="1" stroke-dasharray="1 1"/>
<rect x="43.5" y="263.5" width="8" height="8" rx="1" fill="url(#gExp)" stroke="#a0a0a0"/><path d="M45 267.5h5" stroke="#1f3f8f" stroke-width="1"/>
<rect x="43.5" y="305.5" width="8" height="8" rx="1" fill="url(#gExp)" stroke="#a0a0a0"/><path d="M45 309.5h5" stroke="#1f3f8f" stroke-width="1"/><path d="M47.5 307v5" stroke="#1f3f8f" stroke-width="1"/>
<rect x="43.5" y="326.5" width="8" height="8" rx="1" fill="url(#gExp)" stroke="#a0a0a0"/><path d="M45 330.5h5" stroke="#1f3f8f" stroke-width="1"/><path d="M47.5 328v5" stroke="#1f3f8f" stroke-width="1"/>
<rect x="43.5" y="347.5" width="8" height="8" rx="1" fill="url(#gExp)" stroke="#a0a0a0"/><path d="M45 351.5h5" stroke="#1f3f8f" stroke-width="1"/><path d="M47.5 349v5" stroke="#1f3f8f" stroke-width="1"/>
<path d="M48 372.5H54" stroke="#a0a0a0" stroke-width="1" stroke-dasharray="1 1"/>
<path d="M48 393.5H54" stroke="#a0a0a0" stroke-width="1" stroke-dasharray="1 1"/>
<path d="M48 414.5H54" stroke="#a0a0a0" stroke-width="1" stroke-dasharray="1 1"/>
<path d="M48 435.5H54" stroke="#a0a0a0" stroke-width="1" stroke-dasharray="1 1"/>
<path d="M48 456.5H54" stroke="#a0a0a0" stroke-width="1" stroke-dasharray="1 1"/>
<path d="M48 477.5H54" stroke="#a0a0a0" stroke-width="1" stroke-dasharray="1 1"/>
<path d="M48 498.5H54" stroke="#a0a0a0" stroke-width="1" stroke-dasharray="1 1"/>
<path d="M48 519.5H54" stroke="#a0a0a0" stroke-width="1" stroke-dasharray="1 1"/>
<path d="M48 540.5H54" stroke="#a0a0a0" stroke-width="1" stroke-dasharray="1 1"/>
<path d="M48 561.5H54" stroke="#a0a0a0" stroke-width="1" stroke-dasharray="1 1"/>
<path d="M48 582.5H54" stroke="#a0a0a0" stroke-width="1" stroke-dasharray="1 1"/>
<rect x="43.5" y="599.5" width="8" height="8" rx="1" fill="url(#gExp)" stroke="#a0a0a0"/><path d="M45 603.5h5" stroke="#1f3f8f" stroke-width="1"/><path d="M47.5 601v5" stroke="#1f3f8f" stroke-width="1"/>
<path d="M48 624.5H54" stroke="#a0a0a0" stroke-width="1" stroke-dasharray="1 1"/>
<path d="M48 645.5H54" stroke="#a0a0a0" stroke-width="1" stroke-dasharray="1 1"/>
<path d="M48 666.5H54" stroke="#a0a0a0" stroke-width="1" stroke-dasharray="1 1"/>
<path d="M48 687.5H54" stroke="#a0a0a0" stroke-width="1" stroke-dasharray="1 1"/>
<path d="M48 708.5H54" stroke="#a0a0a0" stroke-width="1" stroke-dasharray="1 1"/>
<path d="M48 729.5H54" stroke="#a0a0a0" stroke-width="1" stroke-dasharray="1 1"/>
<path d="M48 750.5H54" stroke="#a0a0a0" stroke-width="1" stroke-dasharray="1 1"/>
<rect x="7.5" y="788.5" width="8" height="8" rx="1" fill="url(#gExp)" stroke="#a0a0a0"/><path d="M9 792.5h5" stroke="#1f3f8f" stroke-width="1"/>
<path d="M30 813.5H36" stroke="#a0a0a0" stroke-width="1" stroke-dasharray="1 1"/>
<path d="M30 834.5H36" stroke="#a0a0a0" stroke-width="1" stroke-dasharray="1 1"/>
<path d="M30 855.5H36" stroke="#a0a0a0" stroke-width="1" stroke-dasharray="1 1"/>
<path d="M30 876.5H36" stroke="#a0a0a0" stroke-width="1" stroke-dasharray="1 1"/>
<g transform="translate(20,154)"><g stroke="#e01010" stroke-width="1"><path d="M0 6l2-1.5M0 9l2-1.5M0 12l2-1.5M0 15l2-1.5"/></g><path d="M6.5 0v4" stroke="#e01010" stroke-width="1.2"/><path d="M5 3h3l-1.5 2z" fill="#e01010"/><path d="M2.5 5h6v5.5h6v5.5h-12z" fill="#4a4a58"/><rect x="3.5" y="6" width="1" height="1" fill="#d0d0f0"/><rect x="5.5" y="6" width="1" height="1" fill="#d0d0f0"/><rect x="7.5" y="6" width="1" height="1" fill="#d0d0f0"/><rect x="3.5" y="8" width="1" height="1" fill="#d0d0f0"/><rect x="5.5" y="8" width="1" height="1" fill="#d0d0f0"/><rect x="7.5" y="8" width="1" height="1" fill="#d0d0f0"/><rect x="3.5" y="10" width="1" height="1" fill="#d0d0f0"/><rect x="5.5" y="10" width="1" height="1" fill="#d0d0f0"/><rect x="7.5" y="10" width="1" height="1" fill="#d0d0f0"/><rect x="3.5" y="12" width="1" height="1" fill="#d0d0f0"/><rect x="5.5" y="12" width="1" height="1" fill="#d0d0f0"/><rect x="7.5" y="12" width="1" height="1" fill="#d0d0f0"/><rect x="9.5" y="12" width="1" height="1" fill="#d0d0f0"/><rect x="11.5" y="12" width="1" height="1" fill="#d0d0f0"/><rect x="13.5" y="12" width="1" height="1" fill="#d0d0f0"/><rect x="3.5" y="14" width="1" height="1" fill="#d0d0f0"/><rect x="5.5" y="14" width="1" height="1" fill="#d0d0f0"/><rect x="7.5" y="14" width="1" height="1" fill="#d0d0f0"/><rect x="9.5" y="14" width="1" height="1" fill="#d0d0f0"/><rect x="11.5" y="14" width="1" height="1" fill="#d0d0f0"/><rect x="13.5" y="14" width="1" height="1" fill="#d0d0f0"/><circle cx="12" cy="2.5" r="2" fill="#fff" stroke="#000" stroke-width="1"/><path d="M12 4.5v4M10.5 7h3" stroke="#000" stroke-width="1"/><rect x="10" y="9" width="4.5" height="4.5" fill="#30b030" stroke="#000" stroke-width="1"/></g>
<g transform="translate(56,197)"><path d="M0.8 1.5h5.5v8h8.5v5h-14z" fill="#f0b030" stroke="#000" stroke-width="1.2"/><path d="M2 0.5h4.5l1 1M6.5 9.5h8l1 1" fill="none" stroke="#000" stroke-width="0.9"/></g>
<g transform="translate(56,218)"><path d="M0.5 0v14.5h13.5" fill="none" stroke="#000" stroke-width="1"/><path d="M1 14q3-7 6-10q3-2 6-0.5" fill="none" stroke="#2040c0" stroke-width="1" stroke-dasharray="1.2 0.6"/><text x="2" y="6.5" font-size="9" font-family="Liberation Serif">σ</text><text x="8.5" y="13" font-size="9" font-family="Liberation Serif">ε</text></g>
<g transform="translate(56,239)"><circle cx="7.5" cy="8" r="6" fill="#b8c8f0" stroke="#000" stroke-width="1"/><path d="M4 4.5l4 4" stroke="#c01010" stroke-width="1.8"/><path d="M7.5 1v-1.5M14 8h1.5M1.5 2.5l1 1M13.5 2.5l-1 1M1.5 13.5l1-1M13.5 13.5l-1-1" stroke="#000" stroke-width="0.8"/></g>
<g transform="translate(56,260)"><path d="M1 3h10v3h-3v5h3v3h-10v-3h3v-5h-3z" fill="#f8e070" stroke="#000" stroke-width="1.1"/><path d="M6 0v15" stroke="#e02020" stroke-width="0.8" stroke-dasharray="1.2 1"/><path d="M5 1.5l1-1.5 1 1.5z" fill="#e02020"/><path d="M10 8h4M13 7l1.5 1-1.5 1" stroke="#e02020" stroke-width="0.9" fill="none"/><g fill="#e02020"><circle cx="1.5" cy="3.5" r="0.9"/><circle cx="10.5" cy="3.5" r="0.9"/><circle cx="1.5" cy="13.5" r="0.9"/><circle cx="10.5" cy="13.5" r="0.9"/></g></g>
<g transform="translate(56,302)"><rect x="1" y="3" width="11" height="8" fill="#f8e070" stroke="#e02020" stroke-width="1.2"/><rect x="3.5" y="5" width="6" height="4" fill="#fff" stroke="#e02020" stroke-width="0.8"/><path d="M6.5 0.5v14.5M0 7h14" stroke="#000" stroke-width="1"/><path d="M5 2l1.5-2 1.5 2zM13 5.5l2 1.5-2 1.5z" fill="#000"/></g>
<g transform="translate(56,323)"><g stroke="#e01010" stroke-width="1"><path d="M0 6l2-1.5M0 9l2-1.5M0 12l2-1.5M0 15l2-1.5"/></g><path d="M6.5 0v4" stroke="#e01010" stroke-width="1.2"/><path d="M5 3h3l-1.5 2z" fill="#e01010"/><path d="M2.5 5h6v5.5h6v5.5h-12z" fill="#4a4a58"/><rect x="3.5" y="6" width="1" height="1" fill="#d0d0f0"/><rect x="5.5" y="6" width="1" height="1" fill="#d0d0f0"/><rect x="7.5" y="6" width="1" height="1" fill="#d0d0f0"/><rect x="3.5" y="8" width="1" height="1" fill="#d0d0f0"/><rect x="5.5" y="8" width="1" height="1" fill="#d0d0f0"/><rect x="7.5" y="8" width="1" height="1" fill="#d0d0f0"/><rect x="3.5" y="10" width="1" height="1" fill="#d0d0f0"/><rect x="5.5" y="10" width="1" height="1" fill="#d0d0f0"/><rect x="7.5" y="10" width="1" height="1" fill="#d0d0f0"/><rect x="3.5" y="12" width="1" height="1" fill="#d0d0f0"/><rect x="5.5" y="12" width="1" height="1" fill="#d0d0f0"/><rect x="7.5" y="12" width="1" height="1" fill="#d0d0f0"/><rect x="9.5" y="12" width="1" height="1" fill="#d0d0f0"/><rect x="11.5" y="12" width="1" height="1" fill="#d0d0f0"/><rect x="13.5" y="12" width="1" height="1" fill="#d0d0f0"/><rect x="3.5" y="14" width="1" height="1" fill="#d0d0f0"/><rect x="5.5" y="14" width="1" height="1" fill="#d0d0f0"/><rect x="7.5" y="14" width="1" height="1" fill="#d0d0f0"/><rect x="9.5" y="14" width="1" height="1" fill="#d0d0f0"/><rect x="11.5" y="14" width="1" height="1" fill="#d0d0f0"/><rect x="13.5" y="14" width="1" height="1" fill="#d0d0f0"/><circle cx="12" cy="2.5" r="2" fill="#fff" stroke="#000" stroke-width="1"/><path d="M12 4.5v4M10.5 7h3" stroke="#000" stroke-width="1"/><rect x="10" y="9" width="4.5" height="4.5" fill="#30b030" stroke="#000" stroke-width="1"/></g>
<g transform="translate(56,344)"><circle cx="2.5" cy="10" r="2.2" fill="#fff" stroke="#000" stroke-width="1"/><path d="M4.7 10h5M6.5 10v-5h2" stroke="#000" stroke-width="1" fill="none"/><rect x="8.5" y="2.5" width="4" height="3.5" fill="#fff" stroke="#000" stroke-width="1"/><rect x="10.5" y="8" width="4" height="4" fill="#30b030" stroke="#000" stroke-width="1"/></g>
<g transform="translate(56,365)"><path d="M2.5 1.5h4v4h6v3.5h-10z" fill="#fff" stroke="#000" stroke-width="1"/><path d="M3 8l3-5M6 8.5l6-1" stroke="#e02020" stroke-width="0.7" stroke-dasharray="1 0.6"/><path d="M3 8.5h3" stroke="#20a020" stroke-width="0.8"/><path d="M6.5 9v3.5M5.5 11l1 1.5 1-1.5" stroke="#e02020" stroke-width="0.8" fill="none"/><path d="M2.5 12v2M3.8 12v2M8.5 12v2" stroke="#000" stroke-width="0.7"/><path d="M6 13l0.8-0.8 0.8 0.8-0.8 0.8zM10.5 13l0.8-0.8 0.8 0.8-0.8 0.8z" fill="none" stroke="#000" stroke-width="0.5"/></g>
<g transform="translate(56,386)"><path d="M2 1.5h4v4h7.5v4h-11.5z" fill="#fff" stroke="#000" stroke-width="0.9"/><g stroke="#e02020" stroke-width="1.2"><path d="M0.5 1.5h3M2 0v3M3 4h3M4.5 2.5v3M11 5h3M12.5 3.5v3M0.5 9h3M2 7.5v3M6.5 6.5h3M8 5v3M5.5 10.5h3M7 9v3"/></g><path d="M2.5 12v2M3.8 12v2M8.5 12v2" stroke="#000" stroke-width="0.7"/></g>
<g transform="translate(56,407)"><path d="M0.5 0v13.5h14" fill="none" stroke="#000" stroke-width="1.1"/><path d="M1 6.5h13.5M3 4.5v4M4.5 4.5v4M9 4.5v4" stroke="#2a3aa0" stroke-width="1"/><text x="11" y="11.5" font-size="6" font-weight="bold" font-family="Liberation Sans">t</text></g>
<g transform="translate(56,428)"><path d="M2 1h4v7h8v4h-12z" fill="#b8d0f8" stroke="#000" stroke-width="1"/><path d="M2 4.5h4M2 8h4M6 8v4M10 8v4" stroke="#fff" stroke-width="0.6"/><g stroke="#e02020" stroke-width="0.9"><path d="M0 15l2.5-3M3 15l2.5-3M6 15l2.5-3M9 15l2.5-3M12 15l2.5-3"/></g></g>
<g transform="translate(56,449)"><rect x="1" y="0.5" width="11" height="3" fill="#f8e890" stroke="#000" stroke-width="1"/><rect x="3" y="11.5" width="11" height="3" fill="url(#gBlueBar)" stroke="#000" stroke-width="1"/><path d="M4 4v7M10.5 4v7" stroke="#10a040" stroke-width="1.2"/><path d="M3 5.5h2M3 9.5h2M9.5 5.5h2M9.5 9.5h2" stroke="#10a040" stroke-width="1"/></g>
<g transform="translate(56,470)"><rect x="1" y="0.5" width="11" height="3" fill="#f8e890" stroke="#000" stroke-width="1"/><rect x="3" y="11.5" width="11" height="3" fill="url(#gBlueBar)" stroke="#000" stroke-width="1"/><path d="M4 4v7M10.5 4v7" stroke="#10a040" stroke-width="1.2"/><path d="M3 5.5h2M3 9.5h2M9.5 5.5h2M9.5 9.5h2" stroke="#10a040" stroke-width="1"/><path d="M0 7.5h15.5" stroke="#e02020" stroke-width="1.6"/></g>
<g transform="translate(56,491)"><g stroke="#e02020" stroke-width="0.9"><path d="M0.5 2l1.5-1.5M0.5 5l1.5-1.5M0.5 8l1.5-1.5M0.5 11l1.5-1.5M0.5 14l1.5-1.5"/></g><path d="M3.5 0.5v15" stroke="#000" stroke-width="0.9"/><path d="M10 0.5q-3 3-3 7.5q0 4 3 7.5h5.5v-15z" fill="url(#gYelH)"/><path d="M10 0.5q-3 3-3 7.5q0 4 3 7.5" fill="none" stroke="#000" stroke-width="0.8"/><rect x="2" y="5" width="8" height="6" fill="none" stroke="#2020e0" stroke-width="1.1"/></g>
<g transform="translate(56,512)"><g stroke="#e02020" stroke-width="0.9"><path d="M0.5 5l1.5-1.5M0.5 8l1.5-1.5M0.5 11l1.5-1.5M0.5 14l1.5-1.5"/></g><path d="M3.5 3.5v12" stroke="#000" stroke-width="0.9"/><path d="M9 4q-2.5 2-2.5 5.5q0 4 2.5 6h6.5v-11.5z" fill="url(#gYelH)"/><path d="M10 4h5.5M9 4q-2.5 2-2.5 5.5q0 4 2.5 6" fill="none" stroke="#000" stroke-width="0.8"/><path d="M10.5 11v-10h-5M7 0l-1.5 1 1.5 1" stroke="#e02020" stroke-width="0.9" fill="none"/></g>
<g transform="translate(56,533)"><path d="M0 2q1.5-2 3 0q1.5 2 3 0M6 2q1.5 2 3 0q1.5-2 3 0q1.5 2 3 0" fill="none" stroke="#10a040" stroke-width="0.9"/><g stroke="#e02020" stroke-width="0.9"><path d="M0.5 7l1.5-1.5M0.5 10l1.5-1.5M0.5 13l1.5-1.5M0.5 15.5l1.5-1.5"/></g><path d="M3.5 5v11" stroke="#000" stroke-width="0.9"/><path d="M9 5q-2.5 2-2.5 5q0 4 2.5 6h6.5v-11z" fill="url(#gYelH)"/><path d="M10 5h5.5M9 5q-2.5 2-2.5 5q0 4 2.5 6" fill="none" stroke="#000" stroke-width="0.8"/><path d="M12 3v10M11 13h2" stroke="#10a040" stroke-width="1.2"/></g>
<g transform="translate(56,554)"><rect x="10.5" y="0.5" width="5" height="15" fill="#f8e070" stroke="#000" stroke-width="1"/><path d="M10.5 0.5h-2.5l-5 5M10.5 15.5h-2.5l-5-5M3 8h7.5" fill="none" stroke="#000" stroke-width="1"/><rect x="0.5" y="5.5" width="3" height="3.5" fill="#b0b8e0" stroke="#000" stroke-width="0.9"/></g>
<g transform="translate(56,575)"><path d="M3 0.5h12M3 15.5h12M3 0.5v15M0 8h3" fill="none" stroke="#000" stroke-width="1.2"/><path d="M4.5 2v12" stroke="#a0a8d0" stroke-width="1.5"/><path d="M8.5 0.5v15" stroke="#000" stroke-width="1"/><rect x="6" y="4" width="8" height="7" fill="#f8e070" stroke="#000" stroke-width="0.9"/><rect x="7" y="6.5" width="5" height="2" fill="#e02020"/><path d="M10 14.5h5" stroke="#2a3aa0" stroke-width="1.5"/></g>
<g transform="translate(56,596)"><path d="M5 3.5q2-3 9-2" fill="none" stroke="#000" stroke-width="2"/><path d="M9.5 2q-1 8-3 11q-2 3-5 2" fill="none" stroke="#000" stroke-width="2"/><path d="M6 8.5h5" stroke="#000" stroke-width="1.5"/></g>
<g transform="translate(56,617)"><path d="M0.5 0v16" stroke="#404040" stroke-width="1"/><path d="M0.5 8h15" stroke="#a8a8a8" stroke-width="1.2"/><path d="M0.5 8C2 1 3 0 4 0C5 0 6 2 7.5 8C9 14 10 16 11.5 16C13 16 14 14 15.5 8" fill="none" stroke="#c01010" stroke-width="1"/></g>
<g transform="translate(56,638)"><path d="M1.5 0.5h4v7.5h8.5v4.5h-12.5z" fill="url(#gLb)" stroke="#000" stroke-width="1.1"/><path d="M10.5 0v6" stroke="#c01010" stroke-width="1.1"/><path d="M8.5 4.5l2 3 2-3z" fill="#c01010"/></g>
<g transform="translate(56,659)"><path d="M1.5 0.5h4v7.5h8.5v4.5h-12.5z" fill="url(#gLb)" stroke="#000" stroke-width="1.1"/><g stroke="#e02020" stroke-width="0.9"><path d="M0.5 15.5l2.5-2.5M3.5 15.5l2.5-2.5M6.5 15.5l2.5-2.5M9.5 15.5l2.5-2.5"/></g></g>
<g transform="translate(56,680)"><path d="M1.5 0.5h4v7.5h8.5v4.5h-12.5z" fill="#f8f0a0" stroke="#000" stroke-width="1.1"/><path d="M2.5 3l2 2M2.5 11l3-3M8 10l3 1" stroke="#20b020" stroke-width="1"/><path d="M2 7l10 4" stroke="#f0b020" stroke-width="0.8"/><circle cx="2.5" cy="10.5" r="0.8" fill="#e02020"/><circle cx="13" cy="11" r="0.8" fill="#2040c0"/></g>
<g transform="translate(56,701)"><rect x="6" y="6" width="9.5" height="9" fill="#88a8e8" stroke="#303030" stroke-width="0.8"/><path d="M9 6v9M12.5 6v9M6 9h9.5M6 12h9.5" stroke="#303040" stroke-width="0.8"/><path d="M0.5 0.5h6.5l2 2v9.5h-8.5z" fill="#fff" stroke="#000" stroke-width="1"/><path d="M2 4h1.5M4.5 4h2.5M2 6.5h1.5M4.5 6.5h2.5M2 9h1.5M4.5 9h2.5" stroke="#000" stroke-width="0.9"/></g>
<g transform="translate(56,722)"><rect x="0.5" y="1" width="5.5" height="12" fill="url(#gOr2)" stroke="#c0c0c0" stroke-width="0.5"/><path d="M7.5 1h8v2q-3 3-3 4q0 1 3 4v2h-8v-2q3-3 3-4q0-1-3-4z" fill="#30a040" stroke="#207030" stroke-width="0.5"/><path d="M6 7h3" stroke="#e02020" stroke-width="1.2"/><circle cx="8" cy="7" r="1" fill="#e02020"/></g>
<g transform="translate(56,743)"><path d="M3.5 0.5h4v7.5h8v4.5h-12z" fill="url(#gGray)" stroke="#000" stroke-width="1"/><path d="M1.5 0.5v12M3.5 15h12" stroke="#e02020" stroke-width="1"/><path d="M0 2.5l1.5-2 1.5 2M0 10.5l1.5 2 1.5-2M5.5 13.5l-2 1.5 2 1.5M13.5 13.5l2 1.5-2 1.5" fill="none" stroke="#e02020" stroke-width="0.8"/></g>
<g transform="translate(20,763)"><path d="M0 4.5l9 9" stroke="#000" stroke-width="1"/><path d="M6 10l4.5 4.5-1-4z" fill="#000"/><text x="8" y="7" font-size="8" font-style="italic" font-weight="bold" font-family="Liberation Sans">A</text></g>
<g transform="translate(19,784)"><g fill="#1a4a8a"><path d="M1 0h6l-2 2h-2zM3 2h2v12h-2z"/><path d="M0.5 5l3.5-3 3.5 3zM0.5 8l3.5 2.5 3.5-2.5zM0.5 11l3.5 3 3.5-3zM1 16h6l-2-2h-2z"/><g transform="translate(8,0)"><path d="M1 0h6l-2 2h-2zM3 2h2v12h-2z"/><path d="M0.5 5l3.5-3 3.5 3zM0.5 8l3.5 2.5 3.5-2.5zM0.5 11l3.5 3 3.5-3zM1 16h6l-2-2h-2z"/></g></g></g>
<g transform="translate(37,805)"><rect x="3" y="0.5" width="9" height="7" fill="#4a80f0" stroke="#303030" stroke-width="0.9"/><path d="M6.5 7.5h2v3h-2z" fill="#303030"/><rect x="0.5" y="10.5" width="14.5" height="4.5" fill="#e8e8e8" stroke="#303030" stroke-width="0.9"/><path d="M9 12.8h4" stroke="#303030" stroke-width="0.8"/></g>
<g transform="translate(37,826)"><rect x="0.5" y="0.5" width="6" height="7" fill="#b8d0f8" stroke="#303030" stroke-width="0.8"/><path d="M3.5 0.5v7M0.5 4h6" stroke="#303030" stroke-width="0.7"/><rect x="8.5" y="6" width="7" height="9" fill="#b8d0f8" stroke="#303030" stroke-width="0.8"/><path d="M12 6v9M8.5 9h7M8.5 12h7" stroke="#303030" stroke-width="0.7"/><path d="M3 8v3q0 2 3 2h2" fill="none" stroke="#e02020" stroke-width="1.1"/><path d="M6.5 11l2 2-2 2z" fill="#e02020"/></g>
<g transform="translate(37,847)"><rect x="0.5" y="1" width="6" height="14" fill="#b8c8f0" stroke="#909090" stroke-width="0.7"/><rect x="9.5" y="1" width="6" height="14" fill="#b8c8f0" stroke="#909090" stroke-width="0.7"/><path d="M3.5 1v14M12.5 1v14M0.5 8h6M9.5 8h6" stroke="#707070" stroke-width="0.6"/><path d="M6.5 5h3M6.5 10.5h3" stroke="#e02020" stroke-width="1.1"/></g>
<g transform="translate(37,868)"><rect x="0.5" y="1" width="6" height="13" fill="url(#gOr2)" stroke="#909090" stroke-width="0.6"/><path d="M3.5 1v13M0.5 5h6M0.5 9h6" stroke="#b07020" stroke-width="0.6"/><path d="M8 1h7.5v2q-2.5 3-2.5 4q0 1 2.5 4v3h-7.5v-3q2.5-3 2.5-4q0-1-2.5-4z" fill="#30a040" stroke="#207030" stroke-width="0.5"/><path d="M6 7h3" stroke="#e02020" stroke-width="1.2"/></g>
<g transform="translate(7,128)"><g stroke="#202020" stroke-width="0.8"><path d="M1 10.5q0 3 7.5 3.5q7.5 0 7.5-1.5v-3h-15z" fill="#e8c050"/><ellipse cx="8.5" cy="9.5" rx="7.5" ry="2.2" fill="#f0d070"/><path d="M1 6.5v3q7.5 3 15 0v-3" fill="#ecc860"/><ellipse cx="8.5" cy="5.5" rx="7.5" ry="2.2" fill="#f4dc80"/><path d="M1 2.5v3q7.5 3 15 0v-3" fill="#f0d470"/><ellipse cx="8.5" cy="2.5" rx="7.5" ry="2.2" fill="#f8f0a8"/></g><ellipse cx="11" cy="2.5" rx="2.5" ry="1" fill="#000"/></g>
<g transform="translate(124,127)"><path d="M0 5l4.5-5 4.5 5zM0 11l4.5 5 4.5-5z" fill="#a8a8a8"/></g>
<g transform="translate(143,128)"><path d="M0.5 2.5h4l1 1h8.5v9.5h-13.5z" fill="none" stroke="#a8a8a8" stroke-width="1"/><path d="M0.5 3.5h13.5" stroke="#a8a8a8"/><path d="M4 7.5l2-2 2 2M6 5.5v4h4.5" fill="none" stroke="#a8a8a8" stroke-width="1.1"/></g>
<g transform="translate(170,128)"><g fill="none" stroke="#a8a8a8" stroke-width="1"><rect x="0.5" y="0.5" width="3" height="3"/><rect x="5.5" y="5.5" width="3" height="3"/><rect x="11" y="11" width="3" height="3"/><path d="M3.5 2h2v3.5M8.5 7h2.5v4M1.5 6q2 5 8 7"/></g><path d="M0.5 6l3 1.5-2.5 1.5z" fill="#a8a8a8"/></g>
<g transform="translate(196,127)"><circle cx="7.5" cy="7" r="4.2" fill="#f6dc70" stroke="#103010" stroke-width="0.9"/><rect x="5.5" y="11" width="4" height="4" fill="#e8e8e8" stroke="#103010" stroke-width="0.8"/><path d="M5.5 13h4" stroke="#103010" stroke-width="0.7"/><path d="M7.5 0v1.5M1.5 2.5l1 1M13.5 2.5l-1 1M0 6.5h1.5M13.5 6.5h1.5" stroke="#103010" stroke-width="0.9"/></g>
<g transform="translate(254,127)"><rect x="0.5" y="1" width="20" height="16.5" fill="#d8cca0" stroke="#8a7a50" stroke-width="0.8"/><path d="M0 3a2 2 0 0 1 2-2.5h17a2 2 0 0 1 2 2.5v1h-21z" fill="#1a70c8"/><rect x="1.5" y="1.6" width="3" height="1" fill="#fff"/><rect x="3" y="6" width="15" height="7" fill="#fff"/><g stroke="#404040" stroke-width="0.9"><path d="M4 7.5h3M4 9.5h3M4 11.5h3M9 7.5h8M9 9.5h8M9 11.5h8"/></g><g fill="#6a5a30"><rect x="2.5" y="14.5" width="4" height="2"/><rect x="8.5" y="14.5" width="4" height="2"/><rect x="14.5" y="14.5" width="4" height="2"/></g></g>
<g transform="translate(254,160)"><rect x="0.5" y="1" width="20" height="16.5" fill="#d8cca0" stroke="#8a7a50" stroke-width="0.8"/><path d="M0 3a2 2 0 0 1 2-2.5h17a2 2 0 0 1 2 2.5v1h-21z" fill="#1a70c8"/><rect x="1.5" y="1.6" width="3" height="1" fill="#fff"/><rect x="3" y="6" width="15" height="7" fill="#fff"/><g stroke="#404040" stroke-width="0.9"><path d="M4 7.5h3M4 9.5h3M4 11.5h3M9 7.5h8M9 9.5h8M9 11.5h8"/></g><g fill="#6a5a30"><rect x="2.5" y="14.5" width="4" height="2"/><rect x="8.5" y="14.5" width="4" height="2"/><rect x="14.5" y="14.5" width="4" height="2"/></g></g>
<g transform="translate(254,188)"><rect x="0.5" y="1" width="20" height="16.5" fill="#d8cca0" stroke="#8a7a50" stroke-width="0.8"/><path d="M0 3a2 2 0 0 1 2-2.5h17a2 2 0 0 1 2 2.5v1h-21z" fill="#1a70c8"/><rect x="1.5" y="1.6" width="3" height="1" fill="#fff"/><rect x="3" y="6" width="15" height="7" fill="#fff"/><g stroke="#404040" stroke-width="0.9"><path d="M4 7.5h3M4 9.5h3M4 11.5h3M9 7.5h8M9 9.5h8M9 11.5h8"/></g><g fill="#6a5a30"><rect x="2.5" y="14.5" width="4" height="2"/><rect x="8.5" y="14.5" width="4" height="2"/><rect x="14.5" y="14.5" width="4" height="2"/></g></g>
<g transform="translate(254,216)"><rect x="0.5" y="1" width="20" height="16.5" fill="#d8cca0" stroke="#8a7a50" stroke-width="0.8"/><path d="M0 3a2 2 0 0 1 2-2.5h17a2 2 0 0 1 2 2.5v1h-21z" fill="#1a70c8"/><rect x="1.5" y="1.6" width="3" height="1" fill="#fff"/><rect x="3" y="6" width="15" height="7" fill="#fff"/><g stroke="#404040" stroke-width="0.9"><path d="M4 7.5h3M4 9.5h3M4 11.5h3M9 7.5h8M9 9.5h8M9 11.5h8"/></g><g fill="#6a5a30"><rect x="2.5" y="14.5" width="4" height="2"/><rect x="8.5" y="14.5" width="4" height="2"/><rect x="14.5" y="14.5" width="4" height="2"/></g></g>
<g transform="translate(254,277)"><rect x="0.5" y="1" width="20" height="16.5" fill="#d8cca0" stroke="#8a7a50" stroke-width="0.8"/><path d="M0 3a2 2 0 0 1 2-2.5h17a2 2 0 0 1 2 2.5v1h-21z" fill="#1a70c8"/><rect x="1.5" y="1.6" width="3" height="1" fill="#fff"/><rect x="3" y="6" width="15" height="7" fill="#fff"/><g stroke="#404040" stroke-width="0.9"><path d="M4 7.5h3M4 9.5h3M4 11.5h3M9 7.5h8M9 9.5h8M9 11.5h8"/></g><g fill="#6a5a30"><rect x="2.5" y="14.5" width="4" height="2"/><rect x="8.5" y="14.5" width="4" height="2"/><rect x="14.5" y="14.5" width="4" height="2"/></g></g>
<g transform="translate(254,310)"><rect x="0.5" y="1" width="20" height="16.5" fill="#d8cca0" stroke="#8a7a50" stroke-width="0.8"/><path d="M0 3a2 2 0 0 1 2-2.5h17a2 2 0 0 1 2 2.5v1h-21z" fill="#1a70c8"/><rect x="1.5" y="1.6" width="3" height="1" fill="#fff"/><rect x="3" y="6" width="15" height="7" fill="#fff"/><g stroke="#404040" stroke-width="0.9"><path d="M4 7.5h3M4 9.5h3M4 11.5h3M9 7.5h8M9 9.5h8M9 11.5h8"/></g><g fill="#6a5a30"><rect x="2.5" y="14.5" width="4" height="2"/><rect x="8.5" y="14.5" width="4" height="2"/><rect x="14.5" y="14.5" width="4" height="2"/></g></g>
<g transform="translate(254,343)"><rect x="0.5" y="1" width="20" height="16.5" fill="#d8cca0" stroke="#8a7a50" stroke-width="0.8"/><path d="M0 3a2 2 0 0 1 2-2.5h17a2 2 0 0 1 2 2.5v1h-21z" fill="#1a70c8"/><rect x="1.5" y="1.6" width="3" height="1" fill="#fff"/><rect x="3" y="6" width="15" height="7" fill="#fff"/><g stroke="#404040" stroke-width="0.9"><path d="M4 7.5h3M4 9.5h3M4 11.5h3M9 7.5h8M9 9.5h8M9 11.5h8"/></g><g fill="#6a5a30"><rect x="2.5" y="14.5" width="4" height="2"/><rect x="8.5" y="14.5" width="4" height="2"/><rect x="14.5" y="14.5" width="4" height="2"/></g></g>
<g transform="translate(226,126)"><path d="M1.5 0.5v19h19" fill="none" stroke="#000" stroke-width="1"/><path d="M1.5 19q4-9 7-12q4-4 8-3q2 0.5 3.5 1.5" fill="none" stroke="#1060d0" stroke-width="1.1"/><text x="1.5" y="8.5" font-size="17" font-style="italic" font-family="Liberation Serif">σ</text><text x="12.5" y="18.5" font-size="13" font-style="italic" font-weight="bold" font-family="Liberation Serif">ε</text></g>
<g transform="translate(228,157)"><path d="M1 6h12.5v3.5h-3.5v8h3.5v3.5h-12.5v-3.5h3.5v-8h-3.5z" fill="#f2cc70" stroke="#d04010" stroke-width="0.8"/><path d="M7.2 2v21" stroke="#e03010" stroke-width="0.8" stroke-dasharray="1.2 0.8"/><path d="M5.5 3l1.7-2.5 1.7 2.5z" fill="#e03010"/><path d="M10 13.5h6" stroke="#e03010" stroke-width="1.1"/><path d="M15 11.5l3 2-3 2z" fill="#e03010"/><g fill="#e03010"><circle cx="1.5" cy="6.5" r="1"/><circle cx="13" cy="6.5" r="1"/><circle cx="1.5" cy="20.5" r="1"/><circle cx="13" cy="20.5" r="1"/></g></g>
<g transform="translate(225,187)"><path d="M0.5 1.5h10v3h-3v10h3v3h-10v-3h3v-10h-3z" fill="#f2cc70" stroke="#d04010" stroke-width="0.8"/><path d="M5.5 0v20" stroke="#e03010" stroke-width="0.8" stroke-dasharray="1.2 0.8"/><path d="M7.5 9.5h4" stroke="#e03010" stroke-width="1.1"/><path d="M10.5 8l2.5 1.5-2.5 1.5z" fill="#e03010"/><path d="M14.5 2h3.5v12.5h4.5v3h-8z" fill="#30a040" stroke="#206030" stroke-width="0.8"/></g>
<g transform="translate(226,217)"><rect x="0.5" y="0.5" width="8.5" height="4.5" fill="#f08080" stroke="#c05050" stroke-width="0.5"/><rect x="0.5" y="5" width="14.5" height="6.5" fill="#10b010"/><rect x="0.5" y="11.5" width="21" height="6" fill="#a0a0f8" stroke="#202080" stroke-width="0.6"/><path d="M0.5 17.5h21" stroke="#000" stroke-width="1"/></g>
<g transform="translate(225,245)"><path d="M0.5 0.5h6.5v9h14v6.5h-20.5z" fill="url(#gOr)" stroke="#806030" stroke-width="0.8"/><path d="M3 4l2 1M2 11l2 -1M10 12l2-1" stroke="#d04020" stroke-width="0.9"/><path d="M19 19l3-3v3z" fill="#000"/></g>
<g transform="translate(252,243)"><text x="1" y="6.5" font-size="8" font-weight="bold" font-family="Liberation Sans">n2</text><text x="12" y="9.5" font-size="8" font-weight="bold" font-family="Liberation Sans">n1</text><text x="16" y="19" font-size="9" font-weight="bold" font-family="Liberation Sans">t</text><path d="M0 6.5l14 13" stroke="#000" stroke-width="0.6"/><path d="M6 12l8 8M6 12l-0.5-5M6 12l6-3" stroke="#e02020" stroke-width="1.2"/><path d="M12 20l3 0-0.5-3zM4 7.5l1.5-2.5 1.5 2.5zM11 7.5l2.5 0.5-1.5 2z" fill="#e02020"/><path d="M20 21l3-3v3z" fill="#000"/></g>
<g transform="translate(224,275)"><rect x="2" y="6" width="15" height="12" fill="#f8d8a0" stroke="#e04020" stroke-width="1.1"/><rect x="5" y="9" width="9" height="6" fill="#fff" stroke="#e04020" stroke-width="0.9"/><path d="M10 2v22M0 12.5h20" stroke="#000" stroke-width="1.1"/><path d="M8 3.5l2-3 2 3zM19 10.5l3 2-3 2z" fill="#000"/></g>
<g transform="translate(227,310)"><path d="M1 5l8-4.5 8 4.5v10l-8 4.5-8-4.5z" fill="url(#gOr)" stroke="#303030" stroke-width="0.9"/><path d="M1 5l8 4.5 8-4.5-8-4.5z" fill="#a0b8e8" stroke="#303030" stroke-width="0.9"/><path d="M9 9.5v10" stroke="#303030" stroke-width="0.9"/></g>
<g transform="translate(230,342)"><path d="M1 6l10-5v14l-10 5z" fill="url(#gOr)" stroke="#806020" stroke-width="0.8"/><path d="M1 20l10-5" stroke="#1060e0" stroke-width="1.3"/></g>
<g transform="translate(227,377)"><rect x="5" y="0.5" width="5" height="13" fill="url(#gTan)" stroke="#303030" stroke-width="0.8"/><rect x="0.5" y="12.5" width="16" height="6.5" fill="url(#gTan)" stroke="#303030" stroke-width="0.8"/><path d="M5 3.5h5M13.5 3v9" stroke="#e02020" stroke-width="1.2" stroke-dasharray="1.5 1"/><path d="M17 21l3-3v3z" fill="#000"/></g>
<g transform="translate(253,377)"><rect x="2.5" y="0.5" width="3.5" height="12.5" fill="url(#gTan)" stroke="#303030" stroke-width="0.8"/><rect x="0.5" y="12" width="9" height="6.5" fill="url(#gTan)" stroke="#303030" stroke-width="0.8"/><rect x="12" y="12" width="9" height="6.5" fill="url(#gTan)" stroke="#303030" stroke-width="0.8"/><path d="M9 7.5h6" stroke="#e02020" stroke-width="1.5"/><path d="M14.5 5l3 2.5-3 2.5z" fill="#e02020"/><path d="M19.5 21l3-3v3z" fill="#000"/></g>
<g transform="translate(226,403)"><rect x="0.5" y="14" width="17" height="6.5" fill="url(#gTan)" stroke="#303030" stroke-width="0.8"/><path d="M5.5 1h3v13M5.5 1v13" fill="none" stroke="#303030" stroke-width="0.8" stroke-dasharray="1.2 1"/><path d="M7 9l9-8 4 4-9 8z" fill="#f0b050"/><path d="M7 9l3-3 4 4-3 3z" fill="#e07080"/><path d="M9.5 7l4 4" stroke="#808080" stroke-width="1.5"/></g>
<g transform="translate(230,444)"><path d="M5.5 0v11.5M0 5.8h11.5" stroke="#20a030" stroke-width="2"/></g>
<g transform="translate(252,439)"><path d="M3 20l17-17" stroke="#1030b0" stroke-width="1.3"/><path d="M16.5 1l6-1-1.5 6z" fill="#1030b0"/><path d="M0 20h6M3 17v6M9 14l2 2M15 8l2 2" stroke="#20a030" stroke-width="1"/></g>
<g transform="translate(226,467)"><rect x="1" y="1.5" width="18.5" height="18.5" rx="1.5" fill="url(#gOr)" stroke="#c8c8c8" stroke-width="0.6"/><g stroke="#30a030" stroke-width="1.3"><path d="M4.5 0v4M2.5 2h4M10.5 0v4M8.5 2h4M16.5 0v4M14.5 2h4M4.5 5v4M2.5 7h4M10.5 5v4M8.5 7h4M16.5 5v4M14.5 7h4M4.5 10v4M2.5 12h4M10.5 10v4M8.5 12h4M16.5 10v4M14.5 12h4"/></g></g>
<g transform="translate(225,503)"><path d="M0 3h3M12 3h8" stroke="#202020" stroke-width="1.3"/><path d="M7.5 0v6.5M4 3h7" stroke="#1060e0" stroke-width="1.3"/><path d="M9 5.5v13l3-2.8 2.6 4.8 2-1-2.6-4.8h4.3z" fill="#fff" stroke="#202020" stroke-width="1"/><path d="M18 21l3-3v3z" fill="#000"/></g>
<g transform="translate(254,503)"><path d="M1 0.5h5v11h15v7h-20z" fill="url(#gTan)" stroke="#806020" stroke-width="0.8"/><circle cx="4" cy="12" r="2.2" fill="none" stroke="#e02020" stroke-width="1.1"/><path d="M19 21l3-3v3z" fill="#000"/></g>
<g transform="translate(225,529)"><path d="M1 5l3-4h5v10h11v9h-19z" fill="url(#gTan)" stroke="#303030" stroke-width="0.8"/><path d="M1 5h5v15M6 5l3-4M6 11h14" fill="none" stroke="#303030" stroke-width="0.8"/><ellipse cx="13" cy="15" rx="2" ry="4" fill="none" stroke="#e02020" stroke-width="1.2"/><path d="M19 22l3-3v3z" fill="#000"/></g>
<g transform="translate(253,529)"><path d="M1 0.5h5v11h11v6h-16z" fill="url(#gOr)" stroke="#806020" stroke-width="0.8"/><path d="M7 6l7 9" stroke="#808080" stroke-width="1.2"/><g fill="none" stroke="#c01010" stroke-width="1"><circle cx="13" cy="19" r="1.8"/><circle cx="19" cy="17" r="1.8"/><path d="M12 12l2.5 5M16 14l2 2"/></g></g>
<g transform="translate(224,565)"><text x="0" y="9" font-size="8" font-weight="bold" font-family="Liberation Mono">(XYZ)</text><path d="M10.5 11v8M6.5 15h8" stroke="#1060e0" stroke-width="1.6"/><path d="M19 22l3-3v3z" fill="#000"/></g>
<g transform="translate(253,565)"><path d="M9.5 0v21M9.5 15l-7 6M9.5 15l7 6" stroke="#1060e0" stroke-width="1.1"/><path d="M9.5 15l-7 6M9.5 15l7 6" stroke="#202020" stroke-width="1.1"/><path d="M8 4l1.5-3 1.5 3z" fill="#202020"/><path d="M19 22l3-3v3z" fill="#000"/></g>
<g transform="translate(224,593)"><path d="M4 5v5l-3 3M4 10h7M1 18h10" stroke="#202020" stroke-width="1"/><path d="M3 2.5l1-2.5 1 2.5zM0 17.5l2-1.5v3zM12 17.5l-2-1.5v3zM10 8.5l2 1.5-2 1.5z" fill="#202020"/><path d="M13 7l6-5v13l-6 5z" fill="url(#gOr)" stroke="#1060e0" stroke-width="0.8"/><path d="M19 22l3-3v3z" fill="#000"/></g>
<g transform="translate(253,593)"><path d="M9 1v3M7.5 2.5h3M9 11v3M7.5 12.5h3M14 19v3M12.5 20.5h3" stroke="#e02020" stroke-width="1.1"/><path d="M9 5v5M9 14l-6 4M9 14l6 4" stroke="#1060e0" stroke-width="1.2"/><path d="M7.5 7l1.5 2 1.5-2zM1.5 17l3 0-1 2.5zM14 16.5l2.5 1.5-2.5 1z" fill="#1060e0"/><path d="M19 22l3-3v3z" fill="#000"/></g>
<g transform="translate(11,949)"><rect x="0.5" y="0.5" width="17" height="18" fill="url(#gGray)" stroke="#303030" stroke-width="0.9"/><path d="M0 19l6-6 3 3-6 6z" fill="#f0b020" stroke="#303030" stroke-width="0.6"/></g>
<g transform="translate(9,984)"><rect x="0.5" y="0.5" width="24" height="18" fill="#f2dc80" stroke="#202020" stroke-width="1.2"/><text x="2" y="15" font-size="10" font-weight="bold" font-family="Liberation Sans">&gt;&gt;&gt;</text></g>
</svg>
</body></html>
